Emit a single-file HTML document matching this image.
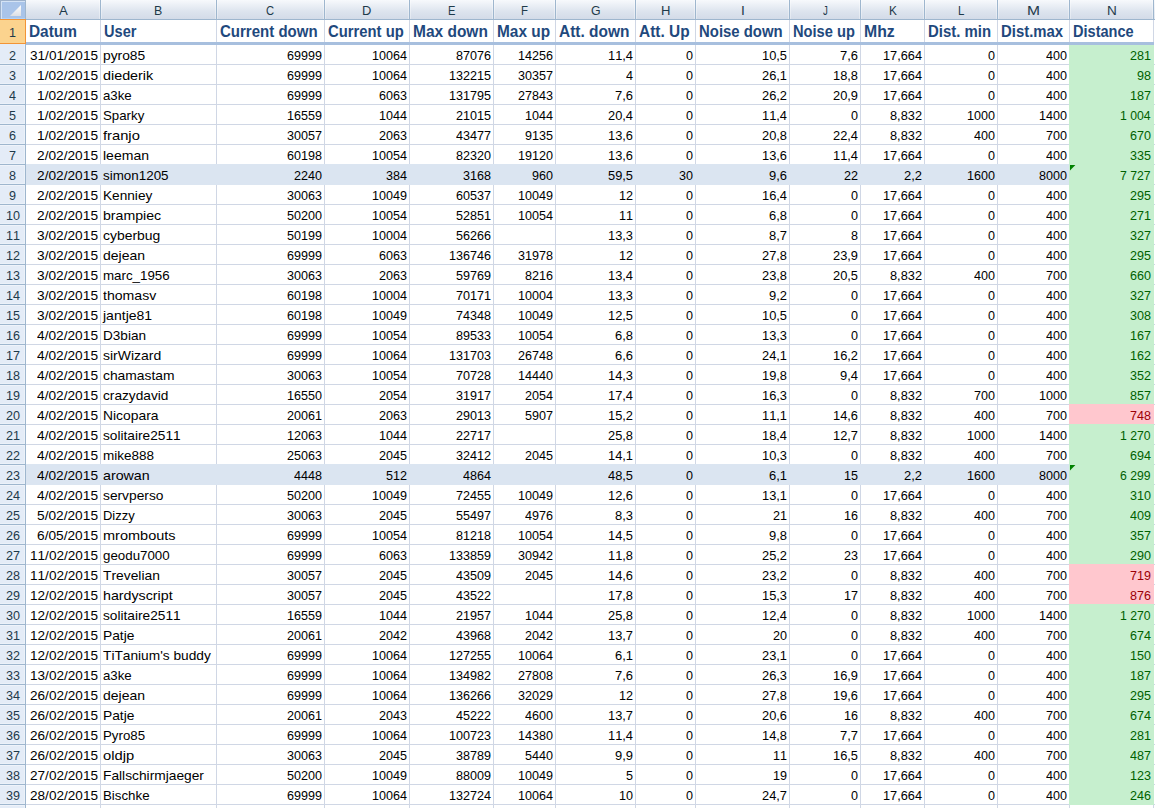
<!DOCTYPE html>
<html><head><meta charset="utf-8"><style>
html,body{margin:0;padding:0;background:#fff}
#r{position:relative;width:1155px;height:808px;overflow:hidden;background:#fff;font-family:"Liberation Sans",sans-serif}
#r>div{position:absolute}
.t{white-space:nowrap;line-height:normal;transform-origin:0 0;font-kerning:none}
</style></head><body><div id="r">
<div style="left:26px;top:0px;width:1129px;height:19px;background:#e4eaf3;background:linear-gradient(#f7f9fc,#dde4ee 60%,#d3dbe8)"></div>
<div style="left:0px;top:19px;width:1155px;height:1px;background:#9eb6ce;"></div>
<div style="left:0px;top:20px;width:25px;height:788px;background:#e4ecf7;"></div>
<div style="left:26px;top:164px;width:1043px;height:21px;background:#dbe5f1;"></div>
<div style="left:26px;top:464px;width:1043px;height:21px;background:#dbe5f1;"></div>
<div style="left:26px;top:64px;width:1129px;height:1px;background:#d0d7e5"></div>
<div style="left:26px;top:84px;width:1129px;height:1px;background:#d0d7e5"></div>
<div style="left:26px;top:104px;width:1129px;height:1px;background:#d0d7e5"></div>
<div style="left:26px;top:124px;width:1129px;height:1px;background:#d0d7e5"></div>
<div style="left:26px;top:144px;width:1129px;height:1px;background:#d0d7e5"></div>
<div style="left:26px;top:164px;width:1129px;height:1px;background:#d0d7e5"></div>
<div style="left:26px;top:184px;width:1129px;height:1px;background:#d0d7e5"></div>
<div style="left:26px;top:204px;width:1129px;height:1px;background:#d0d7e5"></div>
<div style="left:26px;top:224px;width:1129px;height:1px;background:#d0d7e5"></div>
<div style="left:26px;top:244px;width:1129px;height:1px;background:#d0d7e5"></div>
<div style="left:26px;top:264px;width:1129px;height:1px;background:#d0d7e5"></div>
<div style="left:26px;top:284px;width:1129px;height:1px;background:#d0d7e5"></div>
<div style="left:26px;top:304px;width:1129px;height:1px;background:#d0d7e5"></div>
<div style="left:26px;top:324px;width:1129px;height:1px;background:#d0d7e5"></div>
<div style="left:26px;top:344px;width:1129px;height:1px;background:#d0d7e5"></div>
<div style="left:26px;top:364px;width:1129px;height:1px;background:#d0d7e5"></div>
<div style="left:26px;top:384px;width:1129px;height:1px;background:#d0d7e5"></div>
<div style="left:26px;top:404px;width:1129px;height:1px;background:#d0d7e5"></div>
<div style="left:26px;top:424px;width:1129px;height:1px;background:#d0d7e5"></div>
<div style="left:26px;top:444px;width:1129px;height:1px;background:#d0d7e5"></div>
<div style="left:26px;top:464px;width:1129px;height:1px;background:#d0d7e5"></div>
<div style="left:26px;top:484px;width:1129px;height:1px;background:#d0d7e5"></div>
<div style="left:26px;top:504px;width:1129px;height:1px;background:#d0d7e5"></div>
<div style="left:26px;top:524px;width:1129px;height:1px;background:#d0d7e5"></div>
<div style="left:26px;top:544px;width:1129px;height:1px;background:#d0d7e5"></div>
<div style="left:26px;top:564px;width:1129px;height:1px;background:#d0d7e5"></div>
<div style="left:26px;top:584px;width:1129px;height:1px;background:#d0d7e5"></div>
<div style="left:26px;top:604px;width:1129px;height:1px;background:#d0d7e5"></div>
<div style="left:26px;top:624px;width:1129px;height:1px;background:#d0d7e5"></div>
<div style="left:26px;top:644px;width:1129px;height:1px;background:#d0d7e5"></div>
<div style="left:26px;top:664px;width:1129px;height:1px;background:#d0d7e5"></div>
<div style="left:26px;top:684px;width:1129px;height:1px;background:#d0d7e5"></div>
<div style="left:26px;top:704px;width:1129px;height:1px;background:#d0d7e5"></div>
<div style="left:26px;top:724px;width:1129px;height:1px;background:#d0d7e5"></div>
<div style="left:26px;top:744px;width:1129px;height:1px;background:#d0d7e5"></div>
<div style="left:26px;top:764px;width:1129px;height:1px;background:#d0d7e5"></div>
<div style="left:26px;top:784px;width:1129px;height:1px;background:#d0d7e5"></div>
<div style="left:26px;top:804px;width:1129px;height:1px;background:#d0d7e5"></div>
<div style="left:100px;top:20px;width:1px;height:788px;background:#d0d7e5;"></div>
<div style="left:216px;top:20px;width:1px;height:788px;background:#d0d7e5;"></div>
<div style="left:324px;top:20px;width:1px;height:788px;background:#d0d7e5;"></div>
<div style="left:409px;top:20px;width:1px;height:788px;background:#d0d7e5;"></div>
<div style="left:493px;top:20px;width:1px;height:788px;background:#d0d7e5;"></div>
<div style="left:555px;top:20px;width:1px;height:788px;background:#d0d7e5;"></div>
<div style="left:635px;top:20px;width:1px;height:788px;background:#d0d7e5;"></div>
<div style="left:695px;top:20px;width:1px;height:788px;background:#d0d7e5;"></div>
<div style="left:789px;top:20px;width:1px;height:788px;background:#d0d7e5;"></div>
<div style="left:860px;top:20px;width:1px;height:788px;background:#d0d7e5;"></div>
<div style="left:924px;top:20px;width:1px;height:788px;background:#d0d7e5;"></div>
<div style="left:997px;top:20px;width:1px;height:788px;background:#d0d7e5;"></div>
<div style="left:1069px;top:20px;width:1px;height:788px;background:#d0d7e5;"></div>
<div style="left:1153px;top:20px;width:1px;height:788px;background:#d0d7e5;"></div>
<div style="left:26px;top:164px;width:1043px;height:21px;background:#dbe5f1;"></div>
<div style="left:26px;top:464px;width:1043px;height:21px;background:#dbe5f1;"></div>
<div style="left:1069px;top:44px;width:85px;height:21px;background:#c6efce;"></div>
<div style="left:1069px;top:64px;width:85px;height:21px;background:#c6efce;"></div>
<div style="left:1069px;top:84px;width:85px;height:21px;background:#c6efce;"></div>
<div style="left:1069px;top:104px;width:85px;height:21px;background:#c6efce;"></div>
<div style="left:1069px;top:124px;width:85px;height:21px;background:#c6efce;"></div>
<div style="left:1069px;top:144px;width:85px;height:21px;background:#c6efce;"></div>
<div style="left:1069px;top:164px;width:85px;height:21px;background:#c6efce;"></div>
<div style="left:1069px;top:184px;width:85px;height:21px;background:#c6efce;"></div>
<div style="left:1069px;top:204px;width:85px;height:21px;background:#c6efce;"></div>
<div style="left:1069px;top:224px;width:85px;height:21px;background:#c6efce;"></div>
<div style="left:1069px;top:244px;width:85px;height:21px;background:#c6efce;"></div>
<div style="left:1069px;top:264px;width:85px;height:21px;background:#c6efce;"></div>
<div style="left:1069px;top:284px;width:85px;height:21px;background:#c6efce;"></div>
<div style="left:1069px;top:304px;width:85px;height:21px;background:#c6efce;"></div>
<div style="left:1069px;top:324px;width:85px;height:21px;background:#c6efce;"></div>
<div style="left:1069px;top:344px;width:85px;height:21px;background:#c6efce;"></div>
<div style="left:1069px;top:364px;width:85px;height:21px;background:#c6efce;"></div>
<div style="left:1069px;top:384px;width:85px;height:21px;background:#c6efce;"></div>
<div style="left:1069px;top:404px;width:85px;height:21px;background:#ffc7ce;"></div>
<div style="left:1069px;top:424px;width:85px;height:21px;background:#c6efce;"></div>
<div style="left:1069px;top:444px;width:85px;height:21px;background:#c6efce;"></div>
<div style="left:1069px;top:464px;width:85px;height:21px;background:#c6efce;"></div>
<div style="left:1069px;top:484px;width:85px;height:21px;background:#c6efce;"></div>
<div style="left:1069px;top:504px;width:85px;height:21px;background:#c6efce;"></div>
<div style="left:1069px;top:524px;width:85px;height:21px;background:#c6efce;"></div>
<div style="left:1069px;top:544px;width:85px;height:21px;background:#c6efce;"></div>
<div style="left:1069px;top:564px;width:85px;height:21px;background:#ffc7ce;"></div>
<div style="left:1069px;top:584px;width:85px;height:21px;background:#ffc7ce;"></div>
<div style="left:1069px;top:604px;width:85px;height:21px;background:#c6efce;"></div>
<div style="left:1069px;top:624px;width:85px;height:21px;background:#c6efce;"></div>
<div style="left:1069px;top:644px;width:85px;height:21px;background:#c6efce;"></div>
<div style="left:1069px;top:664px;width:85px;height:21px;background:#c6efce;"></div>
<div style="left:1069px;top:684px;width:85px;height:21px;background:#c6efce;"></div>
<div style="left:1069px;top:704px;width:85px;height:21px;background:#c6efce;"></div>
<div style="left:1069px;top:724px;width:85px;height:21px;background:#c6efce;"></div>
<div style="left:1069px;top:744px;width:85px;height:21px;background:#c6efce;"></div>
<div style="left:1069px;top:764px;width:85px;height:21px;background:#c6efce;"></div>
<div style="left:1069px;top:784px;width:85px;height:21px;background:#c6efce;"></div>
<div style="left:26px;top:42px;width:1128px;height:3px;background:#a7bfde;"></div>
<div style="left:25px;top:0px;width:1px;height:20px;background:#9eb6ce;"></div>
<div style="left:100px;top:0px;width:1px;height:20px;background:#9eb6ce;"></div>
<div style="left:99px;top:0px;width:1px;height:19px;background:rgba(255,255,255,0.35);"></div>
<div style="left:101px;top:0px;width:1px;height:19px;background:rgba(255,255,255,0.35);"></div>
<div style="left:216px;top:0px;width:1px;height:20px;background:#9eb6ce;"></div>
<div style="left:215px;top:0px;width:1px;height:19px;background:rgba(255,255,255,0.35);"></div>
<div style="left:217px;top:0px;width:1px;height:19px;background:rgba(255,255,255,0.35);"></div>
<div style="left:324px;top:0px;width:1px;height:20px;background:#9eb6ce;"></div>
<div style="left:323px;top:0px;width:1px;height:19px;background:rgba(255,255,255,0.35);"></div>
<div style="left:325px;top:0px;width:1px;height:19px;background:rgba(255,255,255,0.35);"></div>
<div style="left:409px;top:0px;width:1px;height:20px;background:#9eb6ce;"></div>
<div style="left:408px;top:0px;width:1px;height:19px;background:rgba(255,255,255,0.35);"></div>
<div style="left:410px;top:0px;width:1px;height:19px;background:rgba(255,255,255,0.35);"></div>
<div style="left:493px;top:0px;width:1px;height:20px;background:#9eb6ce;"></div>
<div style="left:492px;top:0px;width:1px;height:19px;background:rgba(255,255,255,0.35);"></div>
<div style="left:494px;top:0px;width:1px;height:19px;background:rgba(255,255,255,0.35);"></div>
<div style="left:555px;top:0px;width:1px;height:20px;background:#9eb6ce;"></div>
<div style="left:554px;top:0px;width:1px;height:19px;background:rgba(255,255,255,0.35);"></div>
<div style="left:556px;top:0px;width:1px;height:19px;background:rgba(255,255,255,0.35);"></div>
<div style="left:635px;top:0px;width:1px;height:20px;background:#9eb6ce;"></div>
<div style="left:634px;top:0px;width:1px;height:19px;background:rgba(255,255,255,0.35);"></div>
<div style="left:636px;top:0px;width:1px;height:19px;background:rgba(255,255,255,0.35);"></div>
<div style="left:695px;top:0px;width:1px;height:20px;background:#9eb6ce;"></div>
<div style="left:694px;top:0px;width:1px;height:19px;background:rgba(255,255,255,0.35);"></div>
<div style="left:696px;top:0px;width:1px;height:19px;background:rgba(255,255,255,0.35);"></div>
<div style="left:789px;top:0px;width:1px;height:20px;background:#9eb6ce;"></div>
<div style="left:788px;top:0px;width:1px;height:19px;background:rgba(255,255,255,0.35);"></div>
<div style="left:790px;top:0px;width:1px;height:19px;background:rgba(255,255,255,0.35);"></div>
<div style="left:860px;top:0px;width:1px;height:20px;background:#9eb6ce;"></div>
<div style="left:859px;top:0px;width:1px;height:19px;background:rgba(255,255,255,0.35);"></div>
<div style="left:861px;top:0px;width:1px;height:19px;background:rgba(255,255,255,0.35);"></div>
<div style="left:924px;top:0px;width:1px;height:20px;background:#9eb6ce;"></div>
<div style="left:923px;top:0px;width:1px;height:19px;background:rgba(255,255,255,0.35);"></div>
<div style="left:925px;top:0px;width:1px;height:19px;background:rgba(255,255,255,0.35);"></div>
<div style="left:997px;top:0px;width:1px;height:20px;background:#9eb6ce;"></div>
<div style="left:996px;top:0px;width:1px;height:19px;background:rgba(255,255,255,0.35);"></div>
<div style="left:998px;top:0px;width:1px;height:19px;background:rgba(255,255,255,0.35);"></div>
<div style="left:1069px;top:0px;width:1px;height:20px;background:#9eb6ce;"></div>
<div style="left:1068px;top:0px;width:1px;height:19px;background:rgba(255,255,255,0.35);"></div>
<div style="left:1070px;top:0px;width:1px;height:19px;background:rgba(255,255,255,0.35);"></div>
<div style="left:1153px;top:0px;width:1px;height:20px;background:#9eb6ce;"></div>
<div style="left:1152px;top:0px;width:1px;height:19px;background:rgba(255,255,255,0.35);"></div>
<div style="left:1154px;top:0px;width:1px;height:19px;background:rgba(255,255,255,0.35);"></div>
<div style="left:24px;top:44px;width:1px;height:764px;background:rgba(255,255,255,0.3);"></div>
<div style="left:0px;top:64px;width:25px;height:1px;background:#9eb6ce;"></div>
<div style="left:0px;top:65px;width:24px;height:1px;background:rgba(255,255,255,0.4);"></div>
<div style="left:0px;top:63px;width:24px;height:1px;background:rgba(255,255,255,0.25);"></div>
<div style="left:0px;top:84px;width:25px;height:1px;background:#9eb6ce;"></div>
<div style="left:0px;top:85px;width:24px;height:1px;background:rgba(255,255,255,0.4);"></div>
<div style="left:0px;top:83px;width:24px;height:1px;background:rgba(255,255,255,0.25);"></div>
<div style="left:0px;top:104px;width:25px;height:1px;background:#9eb6ce;"></div>
<div style="left:0px;top:105px;width:24px;height:1px;background:rgba(255,255,255,0.4);"></div>
<div style="left:0px;top:103px;width:24px;height:1px;background:rgba(255,255,255,0.25);"></div>
<div style="left:0px;top:124px;width:25px;height:1px;background:#9eb6ce;"></div>
<div style="left:0px;top:125px;width:24px;height:1px;background:rgba(255,255,255,0.4);"></div>
<div style="left:0px;top:123px;width:24px;height:1px;background:rgba(255,255,255,0.25);"></div>
<div style="left:0px;top:144px;width:25px;height:1px;background:#9eb6ce;"></div>
<div style="left:0px;top:145px;width:24px;height:1px;background:rgba(255,255,255,0.4);"></div>
<div style="left:0px;top:143px;width:24px;height:1px;background:rgba(255,255,255,0.25);"></div>
<div style="left:0px;top:164px;width:25px;height:1px;background:#9eb6ce;"></div>
<div style="left:0px;top:165px;width:24px;height:1px;background:rgba(255,255,255,0.4);"></div>
<div style="left:0px;top:163px;width:24px;height:1px;background:rgba(255,255,255,0.25);"></div>
<div style="left:0px;top:184px;width:25px;height:1px;background:#9eb6ce;"></div>
<div style="left:0px;top:185px;width:24px;height:1px;background:rgba(255,255,255,0.4);"></div>
<div style="left:0px;top:183px;width:24px;height:1px;background:rgba(255,255,255,0.25);"></div>
<div style="left:0px;top:204px;width:25px;height:1px;background:#9eb6ce;"></div>
<div style="left:0px;top:205px;width:24px;height:1px;background:rgba(255,255,255,0.4);"></div>
<div style="left:0px;top:203px;width:24px;height:1px;background:rgba(255,255,255,0.25);"></div>
<div style="left:0px;top:224px;width:25px;height:1px;background:#9eb6ce;"></div>
<div style="left:0px;top:225px;width:24px;height:1px;background:rgba(255,255,255,0.4);"></div>
<div style="left:0px;top:223px;width:24px;height:1px;background:rgba(255,255,255,0.25);"></div>
<div style="left:0px;top:244px;width:25px;height:1px;background:#9eb6ce;"></div>
<div style="left:0px;top:245px;width:24px;height:1px;background:rgba(255,255,255,0.4);"></div>
<div style="left:0px;top:243px;width:24px;height:1px;background:rgba(255,255,255,0.25);"></div>
<div style="left:0px;top:264px;width:25px;height:1px;background:#9eb6ce;"></div>
<div style="left:0px;top:265px;width:24px;height:1px;background:rgba(255,255,255,0.4);"></div>
<div style="left:0px;top:263px;width:24px;height:1px;background:rgba(255,255,255,0.25);"></div>
<div style="left:0px;top:284px;width:25px;height:1px;background:#9eb6ce;"></div>
<div style="left:0px;top:285px;width:24px;height:1px;background:rgba(255,255,255,0.4);"></div>
<div style="left:0px;top:283px;width:24px;height:1px;background:rgba(255,255,255,0.25);"></div>
<div style="left:0px;top:304px;width:25px;height:1px;background:#9eb6ce;"></div>
<div style="left:0px;top:305px;width:24px;height:1px;background:rgba(255,255,255,0.4);"></div>
<div style="left:0px;top:303px;width:24px;height:1px;background:rgba(255,255,255,0.25);"></div>
<div style="left:0px;top:324px;width:25px;height:1px;background:#9eb6ce;"></div>
<div style="left:0px;top:325px;width:24px;height:1px;background:rgba(255,255,255,0.4);"></div>
<div style="left:0px;top:323px;width:24px;height:1px;background:rgba(255,255,255,0.25);"></div>
<div style="left:0px;top:344px;width:25px;height:1px;background:#9eb6ce;"></div>
<div style="left:0px;top:345px;width:24px;height:1px;background:rgba(255,255,255,0.4);"></div>
<div style="left:0px;top:343px;width:24px;height:1px;background:rgba(255,255,255,0.25);"></div>
<div style="left:0px;top:364px;width:25px;height:1px;background:#9eb6ce;"></div>
<div style="left:0px;top:365px;width:24px;height:1px;background:rgba(255,255,255,0.4);"></div>
<div style="left:0px;top:363px;width:24px;height:1px;background:rgba(255,255,255,0.25);"></div>
<div style="left:0px;top:384px;width:25px;height:1px;background:#9eb6ce;"></div>
<div style="left:0px;top:385px;width:24px;height:1px;background:rgba(255,255,255,0.4);"></div>
<div style="left:0px;top:383px;width:24px;height:1px;background:rgba(255,255,255,0.25);"></div>
<div style="left:0px;top:404px;width:25px;height:1px;background:#9eb6ce;"></div>
<div style="left:0px;top:405px;width:24px;height:1px;background:rgba(255,255,255,0.4);"></div>
<div style="left:0px;top:403px;width:24px;height:1px;background:rgba(255,255,255,0.25);"></div>
<div style="left:0px;top:424px;width:25px;height:1px;background:#9eb6ce;"></div>
<div style="left:0px;top:425px;width:24px;height:1px;background:rgba(255,255,255,0.4);"></div>
<div style="left:0px;top:423px;width:24px;height:1px;background:rgba(255,255,255,0.25);"></div>
<div style="left:0px;top:444px;width:25px;height:1px;background:#9eb6ce;"></div>
<div style="left:0px;top:445px;width:24px;height:1px;background:rgba(255,255,255,0.4);"></div>
<div style="left:0px;top:443px;width:24px;height:1px;background:rgba(255,255,255,0.25);"></div>
<div style="left:0px;top:464px;width:25px;height:1px;background:#9eb6ce;"></div>
<div style="left:0px;top:465px;width:24px;height:1px;background:rgba(255,255,255,0.4);"></div>
<div style="left:0px;top:463px;width:24px;height:1px;background:rgba(255,255,255,0.25);"></div>
<div style="left:0px;top:484px;width:25px;height:1px;background:#9eb6ce;"></div>
<div style="left:0px;top:485px;width:24px;height:1px;background:rgba(255,255,255,0.4);"></div>
<div style="left:0px;top:483px;width:24px;height:1px;background:rgba(255,255,255,0.25);"></div>
<div style="left:0px;top:504px;width:25px;height:1px;background:#9eb6ce;"></div>
<div style="left:0px;top:505px;width:24px;height:1px;background:rgba(255,255,255,0.4);"></div>
<div style="left:0px;top:503px;width:24px;height:1px;background:rgba(255,255,255,0.25);"></div>
<div style="left:0px;top:524px;width:25px;height:1px;background:#9eb6ce;"></div>
<div style="left:0px;top:525px;width:24px;height:1px;background:rgba(255,255,255,0.4);"></div>
<div style="left:0px;top:523px;width:24px;height:1px;background:rgba(255,255,255,0.25);"></div>
<div style="left:0px;top:544px;width:25px;height:1px;background:#9eb6ce;"></div>
<div style="left:0px;top:545px;width:24px;height:1px;background:rgba(255,255,255,0.4);"></div>
<div style="left:0px;top:543px;width:24px;height:1px;background:rgba(255,255,255,0.25);"></div>
<div style="left:0px;top:564px;width:25px;height:1px;background:#9eb6ce;"></div>
<div style="left:0px;top:565px;width:24px;height:1px;background:rgba(255,255,255,0.4);"></div>
<div style="left:0px;top:563px;width:24px;height:1px;background:rgba(255,255,255,0.25);"></div>
<div style="left:0px;top:584px;width:25px;height:1px;background:#9eb6ce;"></div>
<div style="left:0px;top:585px;width:24px;height:1px;background:rgba(255,255,255,0.4);"></div>
<div style="left:0px;top:583px;width:24px;height:1px;background:rgba(255,255,255,0.25);"></div>
<div style="left:0px;top:604px;width:25px;height:1px;background:#9eb6ce;"></div>
<div style="left:0px;top:605px;width:24px;height:1px;background:rgba(255,255,255,0.4);"></div>
<div style="left:0px;top:603px;width:24px;height:1px;background:rgba(255,255,255,0.25);"></div>
<div style="left:0px;top:624px;width:25px;height:1px;background:#9eb6ce;"></div>
<div style="left:0px;top:625px;width:24px;height:1px;background:rgba(255,255,255,0.4);"></div>
<div style="left:0px;top:623px;width:24px;height:1px;background:rgba(255,255,255,0.25);"></div>
<div style="left:0px;top:644px;width:25px;height:1px;background:#9eb6ce;"></div>
<div style="left:0px;top:645px;width:24px;height:1px;background:rgba(255,255,255,0.4);"></div>
<div style="left:0px;top:643px;width:24px;height:1px;background:rgba(255,255,255,0.25);"></div>
<div style="left:0px;top:664px;width:25px;height:1px;background:#9eb6ce;"></div>
<div style="left:0px;top:665px;width:24px;height:1px;background:rgba(255,255,255,0.4);"></div>
<div style="left:0px;top:663px;width:24px;height:1px;background:rgba(255,255,255,0.25);"></div>
<div style="left:0px;top:684px;width:25px;height:1px;background:#9eb6ce;"></div>
<div style="left:0px;top:685px;width:24px;height:1px;background:rgba(255,255,255,0.4);"></div>
<div style="left:0px;top:683px;width:24px;height:1px;background:rgba(255,255,255,0.25);"></div>
<div style="left:0px;top:704px;width:25px;height:1px;background:#9eb6ce;"></div>
<div style="left:0px;top:705px;width:24px;height:1px;background:rgba(255,255,255,0.4);"></div>
<div style="left:0px;top:703px;width:24px;height:1px;background:rgba(255,255,255,0.25);"></div>
<div style="left:0px;top:724px;width:25px;height:1px;background:#9eb6ce;"></div>
<div style="left:0px;top:725px;width:24px;height:1px;background:rgba(255,255,255,0.4);"></div>
<div style="left:0px;top:723px;width:24px;height:1px;background:rgba(255,255,255,0.25);"></div>
<div style="left:0px;top:744px;width:25px;height:1px;background:#9eb6ce;"></div>
<div style="left:0px;top:745px;width:24px;height:1px;background:rgba(255,255,255,0.4);"></div>
<div style="left:0px;top:743px;width:24px;height:1px;background:rgba(255,255,255,0.25);"></div>
<div style="left:0px;top:764px;width:25px;height:1px;background:#9eb6ce;"></div>
<div style="left:0px;top:765px;width:24px;height:1px;background:rgba(255,255,255,0.4);"></div>
<div style="left:0px;top:763px;width:24px;height:1px;background:rgba(255,255,255,0.25);"></div>
<div style="left:0px;top:784px;width:25px;height:1px;background:#9eb6ce;"></div>
<div style="left:0px;top:785px;width:24px;height:1px;background:rgba(255,255,255,0.4);"></div>
<div style="left:0px;top:783px;width:24px;height:1px;background:rgba(255,255,255,0.25);"></div>
<div style="left:0px;top:804px;width:25px;height:1px;background:#9eb6ce;"></div>
<div style="left:0px;top:805px;width:24px;height:1px;background:rgba(255,255,255,0.4);"></div>
<div style="left:0px;top:803px;width:24px;height:1px;background:rgba(255,255,255,0.25);"></div>
<div style="left:25px;top:0px;width:1px;height:808px;background:#9eb6ce;"></div>
<div style="left:0px;top:19px;width:26px;height:25px;background:#fbd38e;box-sizing:border-box;border-top:1px solid #f29436;border-bottom:1px solid #f29436;border-right:1px solid #f29436"></div>
<div style="left:0px;top:0px;width:25px;height:19px;background:#a9c4e9;box-sizing:border-box;border-left:1px solid #9db1cb;border-top:1px solid #9db1cb;box-shadow:inset 1px 1px 0 #d4e3f5, inset 0 -1px 0 #b1d3fa"></div>
<svg style="position:absolute;left:0;top:0" width="25" height="19"><defs><linearGradient id="tg" x1="0" y1="0" x2="0" y2="1"><stop offset="0" stop-color="#ffffff"/><stop offset="1" stop-color="#dcdfe5"/></linearGradient></defs><polygon points="21,5 21,16 10,16" fill="url(#tg)"/></svg>
<svg style="position:absolute;left:1070px;top:165px" width="7" height="7"><polygon points="0,0 5.4,0 0,5.4" fill="#008000"/></svg>
<svg style="position:absolute;left:1070px;top:465px" width="7" height="7"><polygon points="0,0 5.4,0 0,5.4" fill="#008000"/></svg>
<div class="t" style="left:58.61px;top:3.00px;font-size:13px;color:#1e3a4a;transform:scaleX(1.0132)">A</div>
<div class="t" style="left:154.37px;top:3.00px;font-size:13px;color:#1e3a4a;transform:scaleX(0.9525)">B</div>
<div class="t" style="left:266.45px;top:3.00px;font-size:13px;color:#1e3a4a;transform:scaleX(0.8623)">C</div>
<div class="t" style="left:362.33px;top:3.00px;font-size:13px;color:#1e3a4a;transform:scaleX(0.9950)">D</div>
<div class="t" style="left:447.79px;top:3.00px;font-size:13px;color:#1e3a4a;transform:scaleX(0.8550)">E</div>
<div class="t" style="left:521.01px;top:3.00px;font-size:13px;color:#1e3a4a;transform:scaleX(0.8785)">F</div>
<div class="t" style="left:590.71px;top:3.00px;font-size:13px;color:#1e3a4a;transform:scaleX(0.9473)">G</div>
<div class="t" style="left:660.77px;top:3.00px;font-size:13px;color:#1e3a4a;transform:scaleX(1.0076)">H</div>
<div class="t" style="left:740.59px;top:3.00px;font-size:13px;color:#1e3a4a;transform:scaleX(1.0592)">I</div>
<div class="t" style="left:822.58px;top:3.00px;font-size:13px;color:#1e3a4a;transform:scaleX(0.7448)">J</div>
<div class="t" style="left:888.56px;top:3.00px;font-size:13px;color:#1e3a4a;transform:scaleX(0.9097)">K</div>
<div class="t" style="left:957.81px;top:3.00px;font-size:13px;color:#1e3a4a;transform:scaleX(0.8829)">L</div>
<div class="t" style="left:1027.01px;top:3.00px;font-size:13px;color:#1e3a4a;transform:scaleX(1.1988)">M</div>
<div class="t" style="left:1106.60px;top:3.00px;font-size:13px;color:#1e3a4a;transform:scaleX(1.0440)">N</div>
<div class="t" style="left:9.00px;top:25.00px;font-size:13px;color:#1e3a4a;transform:scaleX(0.9682)">1</div>
<div class="t" style="left:9.00px;top:48.00px;font-size:13px;color:#1e3a4a;transform:scaleX(0.9682)">2</div>
<div class="t" style="left:9.00px;top:68.00px;font-size:13px;color:#1e3a4a;transform:scaleX(0.9682)">3</div>
<div class="t" style="left:9.00px;top:88.00px;font-size:13px;color:#1e3a4a;transform:scaleX(0.9682)">4</div>
<div class="t" style="left:9.00px;top:108.00px;font-size:13px;color:#1e3a4a;transform:scaleX(0.9682)">5</div>
<div class="t" style="left:9.00px;top:128.00px;font-size:13px;color:#1e3a4a;transform:scaleX(0.9682)">6</div>
<div class="t" style="left:9.00px;top:148.00px;font-size:13px;color:#1e3a4a;transform:scaleX(0.9682)">7</div>
<div class="t" style="left:9.00px;top:168.00px;font-size:13px;color:#1e3a4a;transform:scaleX(0.9682)">8</div>
<div class="t" style="left:9.00px;top:188.00px;font-size:13px;color:#1e3a4a;transform:scaleX(0.9682)">9</div>
<div class="t" style="left:5.50px;top:208.00px;font-size:13px;color:#1e3a4a;transform:scaleX(0.9682)">10</div>
<div class="t" style="left:5.50px;top:228.00px;font-size:13px;color:#1e3a4a;transform:scaleX(0.9682)">11</div>
<div class="t" style="left:5.50px;top:248.00px;font-size:13px;color:#1e3a4a;transform:scaleX(0.9682)">12</div>
<div class="t" style="left:5.50px;top:268.00px;font-size:13px;color:#1e3a4a;transform:scaleX(0.9682)">13</div>
<div class="t" style="left:5.50px;top:288.00px;font-size:13px;color:#1e3a4a;transform:scaleX(0.9682)">14</div>
<div class="t" style="left:5.50px;top:308.00px;font-size:13px;color:#1e3a4a;transform:scaleX(0.9682)">15</div>
<div class="t" style="left:5.50px;top:328.00px;font-size:13px;color:#1e3a4a;transform:scaleX(0.9682)">16</div>
<div class="t" style="left:5.50px;top:348.00px;font-size:13px;color:#1e3a4a;transform:scaleX(0.9682)">17</div>
<div class="t" style="left:5.50px;top:368.00px;font-size:13px;color:#1e3a4a;transform:scaleX(0.9682)">18</div>
<div class="t" style="left:5.50px;top:388.00px;font-size:13px;color:#1e3a4a;transform:scaleX(0.9682)">19</div>
<div class="t" style="left:5.50px;top:408.00px;font-size:13px;color:#1e3a4a;transform:scaleX(0.9682)">20</div>
<div class="t" style="left:5.50px;top:428.00px;font-size:13px;color:#1e3a4a;transform:scaleX(0.9682)">21</div>
<div class="t" style="left:5.50px;top:448.00px;font-size:13px;color:#1e3a4a;transform:scaleX(0.9682)">22</div>
<div class="t" style="left:5.50px;top:468.00px;font-size:13px;color:#1e3a4a;transform:scaleX(0.9682)">23</div>
<div class="t" style="left:5.50px;top:488.00px;font-size:13px;color:#1e3a4a;transform:scaleX(0.9682)">24</div>
<div class="t" style="left:5.50px;top:508.00px;font-size:13px;color:#1e3a4a;transform:scaleX(0.9682)">25</div>
<div class="t" style="left:5.50px;top:528.00px;font-size:13px;color:#1e3a4a;transform:scaleX(0.9682)">26</div>
<div class="t" style="left:5.50px;top:548.00px;font-size:13px;color:#1e3a4a;transform:scaleX(0.9682)">27</div>
<div class="t" style="left:5.50px;top:568.00px;font-size:13px;color:#1e3a4a;transform:scaleX(0.9682)">28</div>
<div class="t" style="left:5.50px;top:588.00px;font-size:13px;color:#1e3a4a;transform:scaleX(0.9682)">29</div>
<div class="t" style="left:5.50px;top:608.00px;font-size:13px;color:#1e3a4a;transform:scaleX(0.9682)">30</div>
<div class="t" style="left:5.50px;top:628.00px;font-size:13px;color:#1e3a4a;transform:scaleX(0.9682)">31</div>
<div class="t" style="left:5.50px;top:648.00px;font-size:13px;color:#1e3a4a;transform:scaleX(0.9682)">32</div>
<div class="t" style="left:5.50px;top:668.00px;font-size:13px;color:#1e3a4a;transform:scaleX(0.9682)">33</div>
<div class="t" style="left:5.50px;top:688.00px;font-size:13px;color:#1e3a4a;transform:scaleX(0.9682)">34</div>
<div class="t" style="left:5.50px;top:708.00px;font-size:13px;color:#1e3a4a;transform:scaleX(0.9682)">35</div>
<div class="t" style="left:5.50px;top:728.00px;font-size:13px;color:#1e3a4a;transform:scaleX(0.9682)">36</div>
<div class="t" style="left:5.50px;top:748.00px;font-size:13px;color:#1e3a4a;transform:scaleX(0.9682)">37</div>
<div class="t" style="left:5.50px;top:768.00px;font-size:13px;color:#1e3a4a;transform:scaleX(0.9682)">38</div>
<div class="t" style="left:5.50px;top:788.00px;font-size:13px;color:#1e3a4a;transform:scaleX(0.9682)">39</div>
<div class="t" style="left:28.50px;top:23.00px;font-size:15.75px;font-weight:bold;color:#1f497d;transform:scaleX(0.9776)">Datum</div>
<div class="t" style="left:103.50px;top:23.00px;font-size:15.75px;font-weight:bold;color:#1f497d;transform:scaleX(0.9265)">User</div>
<div class="t" style="left:219.50px;top:23.00px;font-size:15.75px;font-weight:bold;color:#1f497d;transform:scaleX(0.9532)">Current down</div>
<div class="t" style="left:327.50px;top:23.00px;font-size:15.75px;font-weight:bold;color:#1f497d;transform:scaleX(0.9416)">Current up</div>
<div class="t" style="left:412.50px;top:23.00px;font-size:15.75px;font-weight:bold;color:#1f497d;transform:scaleX(0.9836)">Max down</div>
<div class="t" style="left:496.50px;top:23.00px;font-size:15.75px;font-weight:bold;color:#1f497d;transform:scaleX(0.9787)">Max up</div>
<div class="t" style="left:558.50px;top:23.00px;font-size:15.75px;font-weight:bold;color:#1f497d;transform:scaleX(0.9822)">Att. down</div>
<div class="t" style="left:638.50px;top:23.00px;font-size:15.75px;font-weight:bold;color:#1f497d;transform:scaleX(0.9813)">Att. Up</div>
<div class="t" style="left:698.50px;top:23.00px;font-size:15.75px;font-weight:bold;color:#1f497d;transform:scaleX(0.9467)">Noise down</div>
<div class="t" style="left:792.50px;top:23.00px;font-size:15.75px;font-weight:bold;color:#1f497d;transform:scaleX(0.9304)">Noise up</div>
<div class="t" style="left:863.50px;top:23.00px;font-size:15.75px;font-weight:bold;color:#1f497d;transform:scaleX(1.0030)">Mhz</div>
<div class="t" style="left:927.50px;top:23.00px;font-size:15.75px;font-weight:bold;color:#1f497d;transform:scaleX(0.9475)">Dist. min</div>
<div class="t" style="left:1000.50px;top:23.00px;font-size:15.75px;font-weight:bold;color:#1f497d;transform:scaleX(0.9456)">Dist.max</div>
<div class="t" style="left:1072.50px;top:23.00px;font-size:15.75px;font-weight:bold;color:#1f497d;transform:scaleX(0.9245)">Distance</div>
<div class="t" style="left:29.80px;top:48.00px;font-size:13px;transform:scaleX(1.0451)">31/01/2015</div>
<div class="t" style="left:102.50px;top:48.00px;font-size:13px;transform:scaleX(1.0604)">pyro85</div>
<div class="t" style="left:286.80px;top:48.00px;font-size:13px;transform:scaleX(0.9682)">69999</div>
<div class="t" style="left:371.80px;top:48.00px;font-size:13px;transform:scaleX(0.9682)">10064</div>
<div class="t" style="left:455.80px;top:48.00px;font-size:13px;transform:scaleX(0.9682)">87076</div>
<div class="t" style="left:517.80px;top:48.00px;font-size:13px;transform:scaleX(0.9682)">14256</div>
<div class="t" style="left:607.80px;top:48.00px;font-size:13px;transform:scaleX(0.9881)">11,4</div>
<div class="t" style="left:685.80px;top:48.00px;font-size:13px;transform:scaleX(0.9682)">0</div>
<div class="t" style="left:761.80px;top:48.00px;font-size:13px;transform:scaleX(0.9881)">10,5</div>
<div class="t" style="left:839.80px;top:48.00px;font-size:13px;transform:scaleX(0.9960)">7,6</div>
<div class="t" style="left:882.80px;top:48.00px;font-size:13px;transform:scaleX(0.9808)">17,664</div>
<div class="t" style="left:987.80px;top:48.00px;font-size:13px;transform:scaleX(0.9682)">0</div>
<div class="t" style="left:1045.80px;top:48.00px;font-size:13px;transform:scaleX(0.9682)">400</div>
<div class="t" style="left:1129.80px;top:48.00px;font-size:13px;color:#006100;transform:scaleX(0.9682)">281</div>
<div class="t" style="left:36.80px;top:68.00px;font-size:13px;transform:scaleX(1.0548)">1/02/2015</div>
<div class="t" style="left:102.50px;top:68.00px;font-size:13px;transform:scaleX(1.1033)">diederik</div>
<div class="t" style="left:286.80px;top:68.00px;font-size:13px;transform:scaleX(0.9682)">69999</div>
<div class="t" style="left:371.80px;top:68.00px;font-size:13px;transform:scaleX(0.9682)">10064</div>
<div class="t" style="left:448.80px;top:68.00px;font-size:13px;transform:scaleX(0.9682)">132215</div>
<div class="t" style="left:517.80px;top:68.00px;font-size:13px;transform:scaleX(0.9682)">30357</div>
<div class="t" style="left:625.80px;top:68.00px;font-size:13px;transform:scaleX(0.9682)">4</div>
<div class="t" style="left:685.80px;top:68.00px;font-size:13px;transform:scaleX(0.9682)">0</div>
<div class="t" style="left:761.80px;top:68.00px;font-size:13px;transform:scaleX(0.9881)">26,1</div>
<div class="t" style="left:832.80px;top:68.00px;font-size:13px;transform:scaleX(0.9881)">18,8</div>
<div class="t" style="left:882.80px;top:68.00px;font-size:13px;transform:scaleX(0.9808)">17,664</div>
<div class="t" style="left:987.80px;top:68.00px;font-size:13px;transform:scaleX(0.9682)">0</div>
<div class="t" style="left:1045.80px;top:68.00px;font-size:13px;transform:scaleX(0.9682)">400</div>
<div class="t" style="left:1136.80px;top:68.00px;font-size:13px;color:#006100;transform:scaleX(0.9682)">98</div>
<div class="t" style="left:36.80px;top:88.00px;font-size:13px;transform:scaleX(1.0548)">1/02/2015</div>
<div class="t" style="left:102.50px;top:88.00px;font-size:13px;transform:scaleX(1.0192)">a3ke</div>
<div class="t" style="left:286.80px;top:88.00px;font-size:13px;transform:scaleX(0.9682)">69999</div>
<div class="t" style="left:378.80px;top:88.00px;font-size:13px;transform:scaleX(0.9682)">6063</div>
<div class="t" style="left:448.80px;top:88.00px;font-size:13px;transform:scaleX(0.9682)">131795</div>
<div class="t" style="left:517.80px;top:88.00px;font-size:13px;transform:scaleX(0.9682)">27843</div>
<div class="t" style="left:614.80px;top:88.00px;font-size:13px;transform:scaleX(0.9960)">7,6</div>
<div class="t" style="left:685.80px;top:88.00px;font-size:13px;transform:scaleX(0.9682)">0</div>
<div class="t" style="left:761.80px;top:88.00px;font-size:13px;transform:scaleX(0.9881)">26,2</div>
<div class="t" style="left:832.80px;top:88.00px;font-size:13px;transform:scaleX(0.9881)">20,9</div>
<div class="t" style="left:882.80px;top:88.00px;font-size:13px;transform:scaleX(0.9808)">17,664</div>
<div class="t" style="left:987.80px;top:88.00px;font-size:13px;transform:scaleX(0.9682)">0</div>
<div class="t" style="left:1045.80px;top:88.00px;font-size:13px;transform:scaleX(0.9682)">400</div>
<div class="t" style="left:1129.80px;top:88.00px;font-size:13px;color:#006100;transform:scaleX(0.9682)">187</div>
<div class="t" style="left:36.80px;top:108.00px;font-size:13px;transform:scaleX(1.0548)">1/02/2015</div>
<div class="t" style="left:102.50px;top:108.00px;font-size:13px;transform:scaleX(1.0206)">Sparky</div>
<div class="t" style="left:286.80px;top:108.00px;font-size:13px;transform:scaleX(0.9682)">16559</div>
<div class="t" style="left:378.80px;top:108.00px;font-size:13px;transform:scaleX(0.9682)">1044</div>
<div class="t" style="left:455.80px;top:108.00px;font-size:13px;transform:scaleX(0.9682)">21015</div>
<div class="t" style="left:524.80px;top:108.00px;font-size:13px;transform:scaleX(0.9682)">1044</div>
<div class="t" style="left:607.80px;top:108.00px;font-size:13px;transform:scaleX(0.9881)">20,4</div>
<div class="t" style="left:685.80px;top:108.00px;font-size:13px;transform:scaleX(0.9682)">0</div>
<div class="t" style="left:761.80px;top:108.00px;font-size:13px;transform:scaleX(0.9881)">11,4</div>
<div class="t" style="left:850.80px;top:108.00px;font-size:13px;transform:scaleX(0.9682)">0</div>
<div class="t" style="left:889.80px;top:108.00px;font-size:13px;transform:scaleX(0.9837)">8,832</div>
<div class="t" style="left:966.80px;top:108.00px;font-size:13px;transform:scaleX(0.9682)">1000</div>
<div class="t" style="left:1038.80px;top:108.00px;font-size:13px;transform:scaleX(0.9682)">1400</div>
<div class="t" style="left:1120.20px;top:108.00px;font-size:13px;color:#006100;transform:scaleX(0.9406)">1 004</div>
<div class="t" style="left:36.80px;top:128.00px;font-size:13px;transform:scaleX(1.0548)">1/02/2015</div>
<div class="t" style="left:102.50px;top:128.00px;font-size:13px;transform:scaleX(1.1322)">franjo</div>
<div class="t" style="left:286.80px;top:128.00px;font-size:13px;transform:scaleX(0.9682)">30057</div>
<div class="t" style="left:378.80px;top:128.00px;font-size:13px;transform:scaleX(0.9682)">2063</div>
<div class="t" style="left:455.80px;top:128.00px;font-size:13px;transform:scaleX(0.9682)">43477</div>
<div class="t" style="left:524.80px;top:128.00px;font-size:13px;transform:scaleX(0.9682)">9135</div>
<div class="t" style="left:607.80px;top:128.00px;font-size:13px;transform:scaleX(0.9881)">13,6</div>
<div class="t" style="left:685.80px;top:128.00px;font-size:13px;transform:scaleX(0.9682)">0</div>
<div class="t" style="left:761.80px;top:128.00px;font-size:13px;transform:scaleX(0.9881)">20,8</div>
<div class="t" style="left:832.80px;top:128.00px;font-size:13px;transform:scaleX(0.9881)">22,4</div>
<div class="t" style="left:889.80px;top:128.00px;font-size:13px;transform:scaleX(0.9837)">8,832</div>
<div class="t" style="left:973.80px;top:128.00px;font-size:13px;transform:scaleX(0.9682)">400</div>
<div class="t" style="left:1045.80px;top:128.00px;font-size:13px;transform:scaleX(0.9682)">700</div>
<div class="t" style="left:1129.80px;top:128.00px;font-size:13px;color:#006100;transform:scaleX(0.9682)">670</div>
<div class="t" style="left:36.80px;top:148.00px;font-size:13px;transform:scaleX(1.0548)">2/02/2015</div>
<div class="t" style="left:102.50px;top:148.00px;font-size:13px;transform:scaleX(1.0782)">leeman</div>
<div class="t" style="left:286.80px;top:148.00px;font-size:13px;transform:scaleX(0.9682)">60198</div>
<div class="t" style="left:371.80px;top:148.00px;font-size:13px;transform:scaleX(0.9682)">10054</div>
<div class="t" style="left:455.80px;top:148.00px;font-size:13px;transform:scaleX(0.9682)">82320</div>
<div class="t" style="left:517.80px;top:148.00px;font-size:13px;transform:scaleX(0.9682)">19120</div>
<div class="t" style="left:607.80px;top:148.00px;font-size:13px;transform:scaleX(0.9881)">13,6</div>
<div class="t" style="left:685.80px;top:148.00px;font-size:13px;transform:scaleX(0.9682)">0</div>
<div class="t" style="left:761.80px;top:148.00px;font-size:13px;transform:scaleX(0.9881)">13,6</div>
<div class="t" style="left:832.80px;top:148.00px;font-size:13px;transform:scaleX(0.9881)">11,4</div>
<div class="t" style="left:882.80px;top:148.00px;font-size:13px;transform:scaleX(0.9808)">17,664</div>
<div class="t" style="left:987.80px;top:148.00px;font-size:13px;transform:scaleX(0.9682)">0</div>
<div class="t" style="left:1045.80px;top:148.00px;font-size:13px;transform:scaleX(0.9682)">400</div>
<div class="t" style="left:1129.80px;top:148.00px;font-size:13px;color:#006100;transform:scaleX(0.9682)">335</div>
<div class="t" style="left:36.80px;top:168.00px;font-size:13px;transform:scaleX(1.0548)">2/02/2015</div>
<div class="t" style="left:102.50px;top:168.00px;font-size:13px;transform:scaleX(1.0305)">simon1205</div>
<div class="t" style="left:293.80px;top:168.00px;font-size:13px;transform:scaleX(0.9682)">2240</div>
<div class="t" style="left:385.80px;top:168.00px;font-size:13px;transform:scaleX(0.9682)">384</div>
<div class="t" style="left:462.80px;top:168.00px;font-size:13px;transform:scaleX(0.9682)">3168</div>
<div class="t" style="left:531.80px;top:168.00px;font-size:13px;transform:scaleX(0.9682)">960</div>
<div class="t" style="left:607.80px;top:168.00px;font-size:13px;transform:scaleX(0.9881)">59,5</div>
<div class="t" style="left:678.80px;top:168.00px;font-size:13px;transform:scaleX(0.9682)">30</div>
<div class="t" style="left:768.80px;top:168.00px;font-size:13px;transform:scaleX(0.9960)">9,6</div>
<div class="t" style="left:843.80px;top:168.00px;font-size:13px;transform:scaleX(0.9682)">22</div>
<div class="t" style="left:903.80px;top:168.00px;font-size:13px;transform:scaleX(0.9960)">2,2</div>
<div class="t" style="left:966.80px;top:168.00px;font-size:13px;transform:scaleX(0.9682)">1600</div>
<div class="t" style="left:1038.80px;top:168.00px;font-size:13px;transform:scaleX(0.9682)">8000</div>
<div class="t" style="left:1120.20px;top:168.00px;font-size:13px;color:#006100;transform:scaleX(0.9406)">7 727</div>
<div class="t" style="left:36.80px;top:188.00px;font-size:13px;transform:scaleX(1.0548)">2/02/2015</div>
<div class="t" style="left:102.50px;top:188.00px;font-size:13px;transform:scaleX(1.0496)">Kenniey</div>
<div class="t" style="left:286.80px;top:188.00px;font-size:13px;transform:scaleX(0.9682)">30063</div>
<div class="t" style="left:371.80px;top:188.00px;font-size:13px;transform:scaleX(0.9682)">10049</div>
<div class="t" style="left:455.80px;top:188.00px;font-size:13px;transform:scaleX(0.9682)">60537</div>
<div class="t" style="left:517.80px;top:188.00px;font-size:13px;transform:scaleX(0.9682)">10049</div>
<div class="t" style="left:618.80px;top:188.00px;font-size:13px;transform:scaleX(0.9682)">12</div>
<div class="t" style="left:685.80px;top:188.00px;font-size:13px;transform:scaleX(0.9682)">0</div>
<div class="t" style="left:761.80px;top:188.00px;font-size:13px;transform:scaleX(0.9881)">16,4</div>
<div class="t" style="left:850.80px;top:188.00px;font-size:13px;transform:scaleX(0.9682)">0</div>
<div class="t" style="left:882.80px;top:188.00px;font-size:13px;transform:scaleX(0.9808)">17,664</div>
<div class="t" style="left:987.80px;top:188.00px;font-size:13px;transform:scaleX(0.9682)">0</div>
<div class="t" style="left:1045.80px;top:188.00px;font-size:13px;transform:scaleX(0.9682)">400</div>
<div class="t" style="left:1129.80px;top:188.00px;font-size:13px;color:#006100;transform:scaleX(0.9682)">295</div>
<div class="t" style="left:36.80px;top:208.00px;font-size:13px;transform:scaleX(1.0548)">2/02/2015</div>
<div class="t" style="left:102.50px;top:208.00px;font-size:13px;transform:scaleX(1.0868)">brampiec</div>
<div class="t" style="left:286.80px;top:208.00px;font-size:13px;transform:scaleX(0.9682)">50200</div>
<div class="t" style="left:371.80px;top:208.00px;font-size:13px;transform:scaleX(0.9682)">10054</div>
<div class="t" style="left:455.80px;top:208.00px;font-size:13px;transform:scaleX(0.9682)">52851</div>
<div class="t" style="left:517.80px;top:208.00px;font-size:13px;transform:scaleX(0.9682)">10054</div>
<div class="t" style="left:618.80px;top:208.00px;font-size:13px;transform:scaleX(0.9682)">11</div>
<div class="t" style="left:685.80px;top:208.00px;font-size:13px;transform:scaleX(0.9682)">0</div>
<div class="t" style="left:768.80px;top:208.00px;font-size:13px;transform:scaleX(0.9960)">6,8</div>
<div class="t" style="left:850.80px;top:208.00px;font-size:13px;transform:scaleX(0.9682)">0</div>
<div class="t" style="left:882.80px;top:208.00px;font-size:13px;transform:scaleX(0.9808)">17,664</div>
<div class="t" style="left:987.80px;top:208.00px;font-size:13px;transform:scaleX(0.9682)">0</div>
<div class="t" style="left:1045.80px;top:208.00px;font-size:13px;transform:scaleX(0.9682)">400</div>
<div class="t" style="left:1129.80px;top:208.00px;font-size:13px;color:#006100;transform:scaleX(0.9682)">271</div>
<div class="t" style="left:36.80px;top:228.00px;font-size:13px;transform:scaleX(1.0548)">3/02/2015</div>
<div class="t" style="left:102.50px;top:228.00px;font-size:13px;transform:scaleX(1.0699)">cyberbug</div>
<div class="t" style="left:286.80px;top:228.00px;font-size:13px;transform:scaleX(0.9682)">50199</div>
<div class="t" style="left:371.80px;top:228.00px;font-size:13px;transform:scaleX(0.9682)">10004</div>
<div class="t" style="left:455.80px;top:228.00px;font-size:13px;transform:scaleX(0.9682)">56266</div>
<div class="t" style="left:607.80px;top:228.00px;font-size:13px;transform:scaleX(0.9881)">13,3</div>
<div class="t" style="left:685.80px;top:228.00px;font-size:13px;transform:scaleX(0.9682)">0</div>
<div class="t" style="left:768.80px;top:228.00px;font-size:13px;transform:scaleX(0.9960)">8,7</div>
<div class="t" style="left:850.80px;top:228.00px;font-size:13px;transform:scaleX(0.9682)">8</div>
<div class="t" style="left:882.80px;top:228.00px;font-size:13px;transform:scaleX(0.9808)">17,664</div>
<div class="t" style="left:987.80px;top:228.00px;font-size:13px;transform:scaleX(0.9682)">0</div>
<div class="t" style="left:1045.80px;top:228.00px;font-size:13px;transform:scaleX(0.9682)">400</div>
<div class="t" style="left:1129.80px;top:228.00px;font-size:13px;color:#006100;transform:scaleX(0.9682)">327</div>
<div class="t" style="left:36.80px;top:248.00px;font-size:13px;transform:scaleX(1.0548)">3/02/2015</div>
<div class="t" style="left:102.50px;top:248.00px;font-size:13px;transform:scaleX(1.0751)">dejean</div>
<div class="t" style="left:286.80px;top:248.00px;font-size:13px;transform:scaleX(0.9682)">69999</div>
<div class="t" style="left:378.80px;top:248.00px;font-size:13px;transform:scaleX(0.9682)">6063</div>
<div class="t" style="left:448.80px;top:248.00px;font-size:13px;transform:scaleX(0.9682)">136746</div>
<div class="t" style="left:517.80px;top:248.00px;font-size:13px;transform:scaleX(0.9682)">31978</div>
<div class="t" style="left:618.80px;top:248.00px;font-size:13px;transform:scaleX(0.9682)">12</div>
<div class="t" style="left:685.80px;top:248.00px;font-size:13px;transform:scaleX(0.9682)">0</div>
<div class="t" style="left:761.80px;top:248.00px;font-size:13px;transform:scaleX(0.9881)">27,8</div>
<div class="t" style="left:832.80px;top:248.00px;font-size:13px;transform:scaleX(0.9881)">23,9</div>
<div class="t" style="left:882.80px;top:248.00px;font-size:13px;transform:scaleX(0.9808)">17,664</div>
<div class="t" style="left:987.80px;top:248.00px;font-size:13px;transform:scaleX(0.9682)">0</div>
<div class="t" style="left:1045.80px;top:248.00px;font-size:13px;transform:scaleX(0.9682)">400</div>
<div class="t" style="left:1129.80px;top:248.00px;font-size:13px;color:#006100;transform:scaleX(0.9682)">295</div>
<div class="t" style="left:36.80px;top:268.00px;font-size:13px;transform:scaleX(1.0548)">3/02/2015</div>
<div class="t" style="left:102.50px;top:268.00px;font-size:13px;transform:scaleX(1.0252)">marc_1956</div>
<div class="t" style="left:286.80px;top:268.00px;font-size:13px;transform:scaleX(0.9682)">30063</div>
<div class="t" style="left:378.80px;top:268.00px;font-size:13px;transform:scaleX(0.9682)">2063</div>
<div class="t" style="left:455.80px;top:268.00px;font-size:13px;transform:scaleX(0.9682)">59769</div>
<div class="t" style="left:524.80px;top:268.00px;font-size:13px;transform:scaleX(0.9682)">8216</div>
<div class="t" style="left:607.80px;top:268.00px;font-size:13px;transform:scaleX(0.9881)">13,4</div>
<div class="t" style="left:685.80px;top:268.00px;font-size:13px;transform:scaleX(0.9682)">0</div>
<div class="t" style="left:761.80px;top:268.00px;font-size:13px;transform:scaleX(0.9881)">23,8</div>
<div class="t" style="left:832.80px;top:268.00px;font-size:13px;transform:scaleX(0.9881)">20,5</div>
<div class="t" style="left:889.80px;top:268.00px;font-size:13px;transform:scaleX(0.9837)">8,832</div>
<div class="t" style="left:973.80px;top:268.00px;font-size:13px;transform:scaleX(0.9682)">400</div>
<div class="t" style="left:1045.80px;top:268.00px;font-size:13px;transform:scaleX(0.9682)">700</div>
<div class="t" style="left:1129.80px;top:268.00px;font-size:13px;color:#006100;transform:scaleX(0.9682)">660</div>
<div class="t" style="left:36.80px;top:288.00px;font-size:13px;transform:scaleX(1.0548)">3/02/2015</div>
<div class="t" style="left:102.50px;top:288.00px;font-size:13px;transform:scaleX(1.0842)">thomasv</div>
<div class="t" style="left:286.80px;top:288.00px;font-size:13px;transform:scaleX(0.9682)">60198</div>
<div class="t" style="left:371.80px;top:288.00px;font-size:13px;transform:scaleX(0.9682)">10004</div>
<div class="t" style="left:455.80px;top:288.00px;font-size:13px;transform:scaleX(0.9682)">70171</div>
<div class="t" style="left:517.80px;top:288.00px;font-size:13px;transform:scaleX(0.9682)">10004</div>
<div class="t" style="left:607.80px;top:288.00px;font-size:13px;transform:scaleX(0.9881)">13,3</div>
<div class="t" style="left:685.80px;top:288.00px;font-size:13px;transform:scaleX(0.9682)">0</div>
<div class="t" style="left:768.80px;top:288.00px;font-size:13px;transform:scaleX(0.9960)">9,2</div>
<div class="t" style="left:850.80px;top:288.00px;font-size:13px;transform:scaleX(0.9682)">0</div>
<div class="t" style="left:882.80px;top:288.00px;font-size:13px;transform:scaleX(0.9808)">17,664</div>
<div class="t" style="left:987.80px;top:288.00px;font-size:13px;transform:scaleX(0.9682)">0</div>
<div class="t" style="left:1045.80px;top:288.00px;font-size:13px;transform:scaleX(0.9682)">400</div>
<div class="t" style="left:1129.80px;top:288.00px;font-size:13px;color:#006100;transform:scaleX(0.9682)">327</div>
<div class="t" style="left:36.80px;top:308.00px;font-size:13px;transform:scaleX(1.0548)">3/02/2015</div>
<div class="t" style="left:102.50px;top:308.00px;font-size:13px;transform:scaleX(1.0795)">jantje81</div>
<div class="t" style="left:286.80px;top:308.00px;font-size:13px;transform:scaleX(0.9682)">60198</div>
<div class="t" style="left:371.80px;top:308.00px;font-size:13px;transform:scaleX(0.9682)">10049</div>
<div class="t" style="left:455.80px;top:308.00px;font-size:13px;transform:scaleX(0.9682)">74348</div>
<div class="t" style="left:517.80px;top:308.00px;font-size:13px;transform:scaleX(0.9682)">10049</div>
<div class="t" style="left:607.80px;top:308.00px;font-size:13px;transform:scaleX(0.9881)">12,5</div>
<div class="t" style="left:685.80px;top:308.00px;font-size:13px;transform:scaleX(0.9682)">0</div>
<div class="t" style="left:761.80px;top:308.00px;font-size:13px;transform:scaleX(0.9881)">10,5</div>
<div class="t" style="left:850.80px;top:308.00px;font-size:13px;transform:scaleX(0.9682)">0</div>
<div class="t" style="left:882.80px;top:308.00px;font-size:13px;transform:scaleX(0.9808)">17,664</div>
<div class="t" style="left:987.80px;top:308.00px;font-size:13px;transform:scaleX(0.9682)">0</div>
<div class="t" style="left:1045.80px;top:308.00px;font-size:13px;transform:scaleX(0.9682)">400</div>
<div class="t" style="left:1129.80px;top:308.00px;font-size:13px;color:#006100;transform:scaleX(0.9682)">308</div>
<div class="t" style="left:36.80px;top:328.00px;font-size:13px;transform:scaleX(1.0548)">4/02/2015</div>
<div class="t" style="left:102.50px;top:328.00px;font-size:13px;transform:scaleX(1.0451)">D3bian</div>
<div class="t" style="left:286.80px;top:328.00px;font-size:13px;transform:scaleX(0.9682)">69999</div>
<div class="t" style="left:371.80px;top:328.00px;font-size:13px;transform:scaleX(0.9682)">10054</div>
<div class="t" style="left:455.80px;top:328.00px;font-size:13px;transform:scaleX(0.9682)">89533</div>
<div class="t" style="left:517.80px;top:328.00px;font-size:13px;transform:scaleX(0.9682)">10054</div>
<div class="t" style="left:614.80px;top:328.00px;font-size:13px;transform:scaleX(0.9960)">6,8</div>
<div class="t" style="left:685.80px;top:328.00px;font-size:13px;transform:scaleX(0.9682)">0</div>
<div class="t" style="left:761.80px;top:328.00px;font-size:13px;transform:scaleX(0.9881)">13,3</div>
<div class="t" style="left:850.80px;top:328.00px;font-size:13px;transform:scaleX(0.9682)">0</div>
<div class="t" style="left:882.80px;top:328.00px;font-size:13px;transform:scaleX(0.9808)">17,664</div>
<div class="t" style="left:987.80px;top:328.00px;font-size:13px;transform:scaleX(0.9682)">0</div>
<div class="t" style="left:1045.80px;top:328.00px;font-size:13px;transform:scaleX(0.9682)">400</div>
<div class="t" style="left:1129.80px;top:328.00px;font-size:13px;color:#006100;transform:scaleX(0.9682)">167</div>
<div class="t" style="left:36.80px;top:348.00px;font-size:13px;transform:scaleX(1.0548)">4/02/2015</div>
<div class="t" style="left:102.50px;top:348.00px;font-size:13px;transform:scaleX(1.0754)">sirWizard</div>
<div class="t" style="left:286.80px;top:348.00px;font-size:13px;transform:scaleX(0.9682)">69999</div>
<div class="t" style="left:371.80px;top:348.00px;font-size:13px;transform:scaleX(0.9682)">10064</div>
<div class="t" style="left:448.80px;top:348.00px;font-size:13px;transform:scaleX(0.9682)">131703</div>
<div class="t" style="left:517.80px;top:348.00px;font-size:13px;transform:scaleX(0.9682)">26748</div>
<div class="t" style="left:614.80px;top:348.00px;font-size:13px;transform:scaleX(0.9960)">6,6</div>
<div class="t" style="left:685.80px;top:348.00px;font-size:13px;transform:scaleX(0.9682)">0</div>
<div class="t" style="left:761.80px;top:348.00px;font-size:13px;transform:scaleX(0.9881)">24,1</div>
<div class="t" style="left:832.80px;top:348.00px;font-size:13px;transform:scaleX(0.9881)">16,2</div>
<div class="t" style="left:882.80px;top:348.00px;font-size:13px;transform:scaleX(0.9808)">17,664</div>
<div class="t" style="left:987.80px;top:348.00px;font-size:13px;transform:scaleX(0.9682)">0</div>
<div class="t" style="left:1045.80px;top:348.00px;font-size:13px;transform:scaleX(0.9682)">400</div>
<div class="t" style="left:1129.80px;top:348.00px;font-size:13px;color:#006100;transform:scaleX(0.9682)">162</div>
<div class="t" style="left:36.80px;top:368.00px;font-size:13px;transform:scaleX(1.0548)">4/02/2015</div>
<div class="t" style="left:102.50px;top:368.00px;font-size:13px;transform:scaleX(1.0641)">chamastam</div>
<div class="t" style="left:286.80px;top:368.00px;font-size:13px;transform:scaleX(0.9682)">30063</div>
<div class="t" style="left:371.80px;top:368.00px;font-size:13px;transform:scaleX(0.9682)">10054</div>
<div class="t" style="left:455.80px;top:368.00px;font-size:13px;transform:scaleX(0.9682)">70728</div>
<div class="t" style="left:517.80px;top:368.00px;font-size:13px;transform:scaleX(0.9682)">14440</div>
<div class="t" style="left:607.80px;top:368.00px;font-size:13px;transform:scaleX(0.9881)">14,3</div>
<div class="t" style="left:685.80px;top:368.00px;font-size:13px;transform:scaleX(0.9682)">0</div>
<div class="t" style="left:761.80px;top:368.00px;font-size:13px;transform:scaleX(0.9881)">19,8</div>
<div class="t" style="left:839.80px;top:368.00px;font-size:13px;transform:scaleX(0.9960)">9,4</div>
<div class="t" style="left:882.80px;top:368.00px;font-size:13px;transform:scaleX(0.9808)">17,664</div>
<div class="t" style="left:987.80px;top:368.00px;font-size:13px;transform:scaleX(0.9682)">0</div>
<div class="t" style="left:1045.80px;top:368.00px;font-size:13px;transform:scaleX(0.9682)">400</div>
<div class="t" style="left:1129.80px;top:368.00px;font-size:13px;color:#006100;transform:scaleX(0.9682)">352</div>
<div class="t" style="left:36.80px;top:388.00px;font-size:13px;transform:scaleX(1.0548)">4/02/2015</div>
<div class="t" style="left:102.50px;top:388.00px;font-size:13px;transform:scaleX(1.0529)">crazydavid</div>
<div class="t" style="left:286.80px;top:388.00px;font-size:13px;transform:scaleX(0.9682)">16550</div>
<div class="t" style="left:378.80px;top:388.00px;font-size:13px;transform:scaleX(0.9682)">2054</div>
<div class="t" style="left:455.80px;top:388.00px;font-size:13px;transform:scaleX(0.9682)">31917</div>
<div class="t" style="left:524.80px;top:388.00px;font-size:13px;transform:scaleX(0.9682)">2054</div>
<div class="t" style="left:607.80px;top:388.00px;font-size:13px;transform:scaleX(0.9881)">17,4</div>
<div class="t" style="left:685.80px;top:388.00px;font-size:13px;transform:scaleX(0.9682)">0</div>
<div class="t" style="left:761.80px;top:388.00px;font-size:13px;transform:scaleX(0.9881)">16,3</div>
<div class="t" style="left:850.80px;top:388.00px;font-size:13px;transform:scaleX(0.9682)">0</div>
<div class="t" style="left:889.80px;top:388.00px;font-size:13px;transform:scaleX(0.9837)">8,832</div>
<div class="t" style="left:973.80px;top:388.00px;font-size:13px;transform:scaleX(0.9682)">700</div>
<div class="t" style="left:1038.80px;top:388.00px;font-size:13px;transform:scaleX(0.9682)">1000</div>
<div class="t" style="left:1129.80px;top:388.00px;font-size:13px;color:#006100;transform:scaleX(0.9682)">857</div>
<div class="t" style="left:36.80px;top:408.00px;font-size:13px;transform:scaleX(1.0548)">4/02/2015</div>
<div class="t" style="left:102.50px;top:408.00px;font-size:13px;transform:scaleX(1.0674)">Nicopara</div>
<div class="t" style="left:286.80px;top:408.00px;font-size:13px;transform:scaleX(0.9682)">20061</div>
<div class="t" style="left:378.80px;top:408.00px;font-size:13px;transform:scaleX(0.9682)">2063</div>
<div class="t" style="left:455.80px;top:408.00px;font-size:13px;transform:scaleX(0.9682)">29013</div>
<div class="t" style="left:524.80px;top:408.00px;font-size:13px;transform:scaleX(0.9682)">5907</div>
<div class="t" style="left:607.80px;top:408.00px;font-size:13px;transform:scaleX(0.9881)">15,2</div>
<div class="t" style="left:685.80px;top:408.00px;font-size:13px;transform:scaleX(0.9682)">0</div>
<div class="t" style="left:761.80px;top:408.00px;font-size:13px;transform:scaleX(0.9881)">11,1</div>
<div class="t" style="left:832.80px;top:408.00px;font-size:13px;transform:scaleX(0.9881)">14,6</div>
<div class="t" style="left:889.80px;top:408.00px;font-size:13px;transform:scaleX(0.9837)">8,832</div>
<div class="t" style="left:973.80px;top:408.00px;font-size:13px;transform:scaleX(0.9682)">400</div>
<div class="t" style="left:1045.80px;top:408.00px;font-size:13px;transform:scaleX(0.9682)">700</div>
<div class="t" style="left:1129.80px;top:408.00px;font-size:13px;color:#9c0006;transform:scaleX(0.9682)">748</div>
<div class="t" style="left:36.80px;top:428.00px;font-size:13px;transform:scaleX(1.0548)">4/02/2015</div>
<div class="t" style="left:102.50px;top:428.00px;font-size:13px;transform:scaleX(1.0528)">solitaire2511</div>
<div class="t" style="left:286.80px;top:428.00px;font-size:13px;transform:scaleX(0.9682)">12063</div>
<div class="t" style="left:378.80px;top:428.00px;font-size:13px;transform:scaleX(0.9682)">1044</div>
<div class="t" style="left:455.80px;top:428.00px;font-size:13px;transform:scaleX(0.9682)">22717</div>
<div class="t" style="left:607.80px;top:428.00px;font-size:13px;transform:scaleX(0.9881)">25,8</div>
<div class="t" style="left:685.80px;top:428.00px;font-size:13px;transform:scaleX(0.9682)">0</div>
<div class="t" style="left:761.80px;top:428.00px;font-size:13px;transform:scaleX(0.9881)">18,4</div>
<div class="t" style="left:832.80px;top:428.00px;font-size:13px;transform:scaleX(0.9881)">12,7</div>
<div class="t" style="left:889.80px;top:428.00px;font-size:13px;transform:scaleX(0.9837)">8,832</div>
<div class="t" style="left:966.80px;top:428.00px;font-size:13px;transform:scaleX(0.9682)">1000</div>
<div class="t" style="left:1038.80px;top:428.00px;font-size:13px;transform:scaleX(0.9682)">1400</div>
<div class="t" style="left:1120.20px;top:428.00px;font-size:13px;color:#006100;transform:scaleX(0.9406)">1 270</div>
<div class="t" style="left:36.80px;top:448.00px;font-size:13px;transform:scaleX(1.0548)">4/02/2015</div>
<div class="t" style="left:102.50px;top:448.00px;font-size:13px;transform:scaleX(1.0393)">mike888</div>
<div class="t" style="left:286.80px;top:448.00px;font-size:13px;transform:scaleX(0.9682)">25063</div>
<div class="t" style="left:378.80px;top:448.00px;font-size:13px;transform:scaleX(0.9682)">2045</div>
<div class="t" style="left:455.80px;top:448.00px;font-size:13px;transform:scaleX(0.9682)">32412</div>
<div class="t" style="left:524.80px;top:448.00px;font-size:13px;transform:scaleX(0.9682)">2045</div>
<div class="t" style="left:607.80px;top:448.00px;font-size:13px;transform:scaleX(0.9881)">14,1</div>
<div class="t" style="left:685.80px;top:448.00px;font-size:13px;transform:scaleX(0.9682)">0</div>
<div class="t" style="left:761.80px;top:448.00px;font-size:13px;transform:scaleX(0.9881)">10,3</div>
<div class="t" style="left:850.80px;top:448.00px;font-size:13px;transform:scaleX(0.9682)">0</div>
<div class="t" style="left:889.80px;top:448.00px;font-size:13px;transform:scaleX(0.9837)">8,832</div>
<div class="t" style="left:973.80px;top:448.00px;font-size:13px;transform:scaleX(0.9682)">400</div>
<div class="t" style="left:1045.80px;top:448.00px;font-size:13px;transform:scaleX(0.9682)">700</div>
<div class="t" style="left:1129.80px;top:448.00px;font-size:13px;color:#006100;transform:scaleX(0.9682)">694</div>
<div class="t" style="left:36.80px;top:468.00px;font-size:13px;transform:scaleX(1.0548)">4/02/2015</div>
<div class="t" style="left:102.50px;top:468.00px;font-size:13px;transform:scaleX(1.0948)">arowan</div>
<div class="t" style="left:293.80px;top:468.00px;font-size:13px;transform:scaleX(0.9682)">4448</div>
<div class="t" style="left:385.80px;top:468.00px;font-size:13px;transform:scaleX(0.9682)">512</div>
<div class="t" style="left:462.80px;top:468.00px;font-size:13px;transform:scaleX(0.9682)">4864</div>
<div class="t" style="left:607.80px;top:468.00px;font-size:13px;transform:scaleX(0.9881)">48,5</div>
<div class="t" style="left:685.80px;top:468.00px;font-size:13px;transform:scaleX(0.9682)">0</div>
<div class="t" style="left:768.80px;top:468.00px;font-size:13px;transform:scaleX(0.9960)">6,1</div>
<div class="t" style="left:843.80px;top:468.00px;font-size:13px;transform:scaleX(0.9682)">15</div>
<div class="t" style="left:903.80px;top:468.00px;font-size:13px;transform:scaleX(0.9960)">2,2</div>
<div class="t" style="left:966.80px;top:468.00px;font-size:13px;transform:scaleX(0.9682)">1600</div>
<div class="t" style="left:1038.80px;top:468.00px;font-size:13px;transform:scaleX(0.9682)">8000</div>
<div class="t" style="left:1120.20px;top:468.00px;font-size:13px;color:#006100;transform:scaleX(0.9406)">6 299</div>
<div class="t" style="left:36.80px;top:488.00px;font-size:13px;transform:scaleX(1.0548)">4/02/2015</div>
<div class="t" style="left:102.50px;top:488.00px;font-size:13px;transform:scaleX(1.0585)">servperso</div>
<div class="t" style="left:286.80px;top:488.00px;font-size:13px;transform:scaleX(0.9682)">50200</div>
<div class="t" style="left:371.80px;top:488.00px;font-size:13px;transform:scaleX(0.9682)">10049</div>
<div class="t" style="left:455.80px;top:488.00px;font-size:13px;transform:scaleX(0.9682)">72455</div>
<div class="t" style="left:517.80px;top:488.00px;font-size:13px;transform:scaleX(0.9682)">10049</div>
<div class="t" style="left:607.80px;top:488.00px;font-size:13px;transform:scaleX(0.9881)">12,6</div>
<div class="t" style="left:685.80px;top:488.00px;font-size:13px;transform:scaleX(0.9682)">0</div>
<div class="t" style="left:761.80px;top:488.00px;font-size:13px;transform:scaleX(0.9881)">13,1</div>
<div class="t" style="left:850.80px;top:488.00px;font-size:13px;transform:scaleX(0.9682)">0</div>
<div class="t" style="left:882.80px;top:488.00px;font-size:13px;transform:scaleX(0.9808)">17,664</div>
<div class="t" style="left:987.80px;top:488.00px;font-size:13px;transform:scaleX(0.9682)">0</div>
<div class="t" style="left:1045.80px;top:488.00px;font-size:13px;transform:scaleX(0.9682)">400</div>
<div class="t" style="left:1129.80px;top:488.00px;font-size:13px;color:#006100;transform:scaleX(0.9682)">310</div>
<div class="t" style="left:36.80px;top:508.00px;font-size:13px;transform:scaleX(1.0548)">5/02/2015</div>
<div class="t" style="left:102.50px;top:508.00px;font-size:13px;transform:scaleX(0.9974)">Dizzy</div>
<div class="t" style="left:286.80px;top:508.00px;font-size:13px;transform:scaleX(0.9682)">30063</div>
<div class="t" style="left:378.80px;top:508.00px;font-size:13px;transform:scaleX(0.9682)">2045</div>
<div class="t" style="left:455.80px;top:508.00px;font-size:13px;transform:scaleX(0.9682)">55497</div>
<div class="t" style="left:524.80px;top:508.00px;font-size:13px;transform:scaleX(0.9682)">4976</div>
<div class="t" style="left:614.80px;top:508.00px;font-size:13px;transform:scaleX(0.9960)">8,3</div>
<div class="t" style="left:685.80px;top:508.00px;font-size:13px;transform:scaleX(0.9682)">0</div>
<div class="t" style="left:772.80px;top:508.00px;font-size:13px;transform:scaleX(0.9682)">21</div>
<div class="t" style="left:843.80px;top:508.00px;font-size:13px;transform:scaleX(0.9682)">16</div>
<div class="t" style="left:889.80px;top:508.00px;font-size:13px;transform:scaleX(0.9837)">8,832</div>
<div class="t" style="left:973.80px;top:508.00px;font-size:13px;transform:scaleX(0.9682)">400</div>
<div class="t" style="left:1045.80px;top:508.00px;font-size:13px;transform:scaleX(0.9682)">700</div>
<div class="t" style="left:1129.80px;top:508.00px;font-size:13px;color:#006100;transform:scaleX(0.9682)">409</div>
<div class="t" style="left:36.80px;top:528.00px;font-size:13px;transform:scaleX(1.0548)">6/05/2015</div>
<div class="t" style="left:102.50px;top:528.00px;font-size:13px;transform:scaleX(1.1157)">mrombouts</div>
<div class="t" style="left:286.80px;top:528.00px;font-size:13px;transform:scaleX(0.9682)">69999</div>
<div class="t" style="left:371.80px;top:528.00px;font-size:13px;transform:scaleX(0.9682)">10054</div>
<div class="t" style="left:455.80px;top:528.00px;font-size:13px;transform:scaleX(0.9682)">81218</div>
<div class="t" style="left:517.80px;top:528.00px;font-size:13px;transform:scaleX(0.9682)">10054</div>
<div class="t" style="left:607.80px;top:528.00px;font-size:13px;transform:scaleX(0.9881)">14,5</div>
<div class="t" style="left:685.80px;top:528.00px;font-size:13px;transform:scaleX(0.9682)">0</div>
<div class="t" style="left:768.80px;top:528.00px;font-size:13px;transform:scaleX(0.9960)">9,8</div>
<div class="t" style="left:850.80px;top:528.00px;font-size:13px;transform:scaleX(0.9682)">0</div>
<div class="t" style="left:882.80px;top:528.00px;font-size:13px;transform:scaleX(0.9808)">17,664</div>
<div class="t" style="left:987.80px;top:528.00px;font-size:13px;transform:scaleX(0.9682)">0</div>
<div class="t" style="left:1045.80px;top:528.00px;font-size:13px;transform:scaleX(0.9682)">400</div>
<div class="t" style="left:1129.80px;top:528.00px;font-size:13px;color:#006100;transform:scaleX(0.9682)">357</div>
<div class="t" style="left:29.80px;top:548.00px;font-size:13px;transform:scaleX(1.0451)">11/02/2015</div>
<div class="t" style="left:102.50px;top:548.00px;font-size:13px;transform:scaleX(1.0245)">geodu7000</div>
<div class="t" style="left:286.80px;top:548.00px;font-size:13px;transform:scaleX(0.9682)">69999</div>
<div class="t" style="left:378.80px;top:548.00px;font-size:13px;transform:scaleX(0.9682)">6063</div>
<div class="t" style="left:448.80px;top:548.00px;font-size:13px;transform:scaleX(0.9682)">133859</div>
<div class="t" style="left:517.80px;top:548.00px;font-size:13px;transform:scaleX(0.9682)">30942</div>
<div class="t" style="left:607.80px;top:548.00px;font-size:13px;transform:scaleX(0.9881)">11,8</div>
<div class="t" style="left:685.80px;top:548.00px;font-size:13px;transform:scaleX(0.9682)">0</div>
<div class="t" style="left:761.80px;top:548.00px;font-size:13px;transform:scaleX(0.9881)">25,2</div>
<div class="t" style="left:843.80px;top:548.00px;font-size:13px;transform:scaleX(0.9682)">23</div>
<div class="t" style="left:882.80px;top:548.00px;font-size:13px;transform:scaleX(0.9808)">17,664</div>
<div class="t" style="left:987.80px;top:548.00px;font-size:13px;transform:scaleX(0.9682)">0</div>
<div class="t" style="left:1045.80px;top:548.00px;font-size:13px;transform:scaleX(0.9682)">400</div>
<div class="t" style="left:1129.80px;top:548.00px;font-size:13px;color:#006100;transform:scaleX(0.9682)">290</div>
<div class="t" style="left:29.80px;top:568.00px;font-size:13px;transform:scaleX(1.0451)">11/02/2015</div>
<div class="t" style="left:102.50px;top:568.00px;font-size:13px;transform:scaleX(1.0638)">Trevelian</div>
<div class="t" style="left:286.80px;top:568.00px;font-size:13px;transform:scaleX(0.9682)">30057</div>
<div class="t" style="left:378.80px;top:568.00px;font-size:13px;transform:scaleX(0.9682)">2045</div>
<div class="t" style="left:455.80px;top:568.00px;font-size:13px;transform:scaleX(0.9682)">43509</div>
<div class="t" style="left:524.80px;top:568.00px;font-size:13px;transform:scaleX(0.9682)">2045</div>
<div class="t" style="left:607.80px;top:568.00px;font-size:13px;transform:scaleX(0.9881)">14,6</div>
<div class="t" style="left:685.80px;top:568.00px;font-size:13px;transform:scaleX(0.9682)">0</div>
<div class="t" style="left:761.80px;top:568.00px;font-size:13px;transform:scaleX(0.9881)">23,2</div>
<div class="t" style="left:850.80px;top:568.00px;font-size:13px;transform:scaleX(0.9682)">0</div>
<div class="t" style="left:889.80px;top:568.00px;font-size:13px;transform:scaleX(0.9837)">8,832</div>
<div class="t" style="left:973.80px;top:568.00px;font-size:13px;transform:scaleX(0.9682)">400</div>
<div class="t" style="left:1045.80px;top:568.00px;font-size:13px;transform:scaleX(0.9682)">700</div>
<div class="t" style="left:1129.80px;top:568.00px;font-size:13px;color:#9c0006;transform:scaleX(0.9682)">719</div>
<div class="t" style="left:29.80px;top:588.00px;font-size:13px;transform:scaleX(1.0451)">12/02/2015</div>
<div class="t" style="left:102.50px;top:588.00px;font-size:13px;transform:scaleX(1.0946)">hardyscript</div>
<div class="t" style="left:286.80px;top:588.00px;font-size:13px;transform:scaleX(0.9682)">30057</div>
<div class="t" style="left:378.80px;top:588.00px;font-size:13px;transform:scaleX(0.9682)">2045</div>
<div class="t" style="left:455.80px;top:588.00px;font-size:13px;transform:scaleX(0.9682)">43522</div>
<div class="t" style="left:607.80px;top:588.00px;font-size:13px;transform:scaleX(0.9881)">17,8</div>
<div class="t" style="left:685.80px;top:588.00px;font-size:13px;transform:scaleX(0.9682)">0</div>
<div class="t" style="left:761.80px;top:588.00px;font-size:13px;transform:scaleX(0.9881)">15,3</div>
<div class="t" style="left:843.80px;top:588.00px;font-size:13px;transform:scaleX(0.9682)">17</div>
<div class="t" style="left:889.80px;top:588.00px;font-size:13px;transform:scaleX(0.9837)">8,832</div>
<div class="t" style="left:973.80px;top:588.00px;font-size:13px;transform:scaleX(0.9682)">400</div>
<div class="t" style="left:1045.80px;top:588.00px;font-size:13px;transform:scaleX(0.9682)">700</div>
<div class="t" style="left:1129.80px;top:588.00px;font-size:13px;color:#9c0006;transform:scaleX(0.9682)">876</div>
<div class="t" style="left:29.80px;top:608.00px;font-size:13px;transform:scaleX(1.0451)">12/02/2015</div>
<div class="t" style="left:102.50px;top:608.00px;font-size:13px;transform:scaleX(1.0528)">solitaire2511</div>
<div class="t" style="left:286.80px;top:608.00px;font-size:13px;transform:scaleX(0.9682)">16559</div>
<div class="t" style="left:378.80px;top:608.00px;font-size:13px;transform:scaleX(0.9682)">1044</div>
<div class="t" style="left:455.80px;top:608.00px;font-size:13px;transform:scaleX(0.9682)">21957</div>
<div class="t" style="left:524.80px;top:608.00px;font-size:13px;transform:scaleX(0.9682)">1044</div>
<div class="t" style="left:607.80px;top:608.00px;font-size:13px;transform:scaleX(0.9881)">25,8</div>
<div class="t" style="left:685.80px;top:608.00px;font-size:13px;transform:scaleX(0.9682)">0</div>
<div class="t" style="left:761.80px;top:608.00px;font-size:13px;transform:scaleX(0.9881)">12,4</div>
<div class="t" style="left:850.80px;top:608.00px;font-size:13px;transform:scaleX(0.9682)">0</div>
<div class="t" style="left:889.80px;top:608.00px;font-size:13px;transform:scaleX(0.9837)">8,832</div>
<div class="t" style="left:966.80px;top:608.00px;font-size:13px;transform:scaleX(0.9682)">1000</div>
<div class="t" style="left:1038.80px;top:608.00px;font-size:13px;transform:scaleX(0.9682)">1400</div>
<div class="t" style="left:1120.20px;top:608.00px;font-size:13px;color:#006100;transform:scaleX(0.9406)">1 270</div>
<div class="t" style="left:29.80px;top:628.00px;font-size:13px;transform:scaleX(1.0451)">12/02/2015</div>
<div class="t" style="left:102.50px;top:628.00px;font-size:13px;transform:scaleX(1.0594)">Patje</div>
<div class="t" style="left:286.80px;top:628.00px;font-size:13px;transform:scaleX(0.9682)">20061</div>
<div class="t" style="left:378.80px;top:628.00px;font-size:13px;transform:scaleX(0.9682)">2042</div>
<div class="t" style="left:455.80px;top:628.00px;font-size:13px;transform:scaleX(0.9682)">43968</div>
<div class="t" style="left:524.80px;top:628.00px;font-size:13px;transform:scaleX(0.9682)">2042</div>
<div class="t" style="left:607.80px;top:628.00px;font-size:13px;transform:scaleX(0.9881)">13,7</div>
<div class="t" style="left:685.80px;top:628.00px;font-size:13px;transform:scaleX(0.9682)">0</div>
<div class="t" style="left:772.80px;top:628.00px;font-size:13px;transform:scaleX(0.9682)">20</div>
<div class="t" style="left:850.80px;top:628.00px;font-size:13px;transform:scaleX(0.9682)">0</div>
<div class="t" style="left:889.80px;top:628.00px;font-size:13px;transform:scaleX(0.9837)">8,832</div>
<div class="t" style="left:973.80px;top:628.00px;font-size:13px;transform:scaleX(0.9682)">400</div>
<div class="t" style="left:1045.80px;top:628.00px;font-size:13px;transform:scaleX(0.9682)">700</div>
<div class="t" style="left:1129.80px;top:628.00px;font-size:13px;color:#006100;transform:scaleX(0.9682)">674</div>
<div class="t" style="left:29.80px;top:648.00px;font-size:13px;transform:scaleX(1.0451)">12/02/2015</div>
<div class="t" style="left:102.50px;top:648.00px;font-size:13px;transform:scaleX(1.0548)">TiTanium's buddy</div>
<div class="t" style="left:286.80px;top:648.00px;font-size:13px;transform:scaleX(0.9682)">69999</div>
<div class="t" style="left:371.80px;top:648.00px;font-size:13px;transform:scaleX(0.9682)">10064</div>
<div class="t" style="left:448.80px;top:648.00px;font-size:13px;transform:scaleX(0.9682)">127255</div>
<div class="t" style="left:517.80px;top:648.00px;font-size:13px;transform:scaleX(0.9682)">10064</div>
<div class="t" style="left:614.80px;top:648.00px;font-size:13px;transform:scaleX(0.9960)">6,1</div>
<div class="t" style="left:685.80px;top:648.00px;font-size:13px;transform:scaleX(0.9682)">0</div>
<div class="t" style="left:761.80px;top:648.00px;font-size:13px;transform:scaleX(0.9881)">23,1</div>
<div class="t" style="left:850.80px;top:648.00px;font-size:13px;transform:scaleX(0.9682)">0</div>
<div class="t" style="left:882.80px;top:648.00px;font-size:13px;transform:scaleX(0.9808)">17,664</div>
<div class="t" style="left:987.80px;top:648.00px;font-size:13px;transform:scaleX(0.9682)">0</div>
<div class="t" style="left:1045.80px;top:648.00px;font-size:13px;transform:scaleX(0.9682)">400</div>
<div class="t" style="left:1129.80px;top:648.00px;font-size:13px;color:#006100;transform:scaleX(0.9682)">150</div>
<div class="t" style="left:29.80px;top:668.00px;font-size:13px;transform:scaleX(1.0451)">13/02/2015</div>
<div class="t" style="left:102.50px;top:668.00px;font-size:13px;transform:scaleX(1.0192)">a3ke</div>
<div class="t" style="left:286.80px;top:668.00px;font-size:13px;transform:scaleX(0.9682)">69999</div>
<div class="t" style="left:371.80px;top:668.00px;font-size:13px;transform:scaleX(0.9682)">10064</div>
<div class="t" style="left:448.80px;top:668.00px;font-size:13px;transform:scaleX(0.9682)">134982</div>
<div class="t" style="left:517.80px;top:668.00px;font-size:13px;transform:scaleX(0.9682)">27808</div>
<div class="t" style="left:614.80px;top:668.00px;font-size:13px;transform:scaleX(0.9960)">7,6</div>
<div class="t" style="left:685.80px;top:668.00px;font-size:13px;transform:scaleX(0.9682)">0</div>
<div class="t" style="left:761.80px;top:668.00px;font-size:13px;transform:scaleX(0.9881)">26,3</div>
<div class="t" style="left:832.80px;top:668.00px;font-size:13px;transform:scaleX(0.9881)">16,9</div>
<div class="t" style="left:882.80px;top:668.00px;font-size:13px;transform:scaleX(0.9808)">17,664</div>
<div class="t" style="left:987.80px;top:668.00px;font-size:13px;transform:scaleX(0.9682)">0</div>
<div class="t" style="left:1045.80px;top:668.00px;font-size:13px;transform:scaleX(0.9682)">400</div>
<div class="t" style="left:1129.80px;top:668.00px;font-size:13px;color:#006100;transform:scaleX(0.9682)">187</div>
<div class="t" style="left:29.80px;top:688.00px;font-size:13px;transform:scaleX(1.0451)">26/02/2015</div>
<div class="t" style="left:102.50px;top:688.00px;font-size:13px;transform:scaleX(1.0751)">dejean</div>
<div class="t" style="left:286.80px;top:688.00px;font-size:13px;transform:scaleX(0.9682)">69999</div>
<div class="t" style="left:371.80px;top:688.00px;font-size:13px;transform:scaleX(0.9682)">10064</div>
<div class="t" style="left:448.80px;top:688.00px;font-size:13px;transform:scaleX(0.9682)">136266</div>
<div class="t" style="left:517.80px;top:688.00px;font-size:13px;transform:scaleX(0.9682)">32029</div>
<div class="t" style="left:618.80px;top:688.00px;font-size:13px;transform:scaleX(0.9682)">12</div>
<div class="t" style="left:685.80px;top:688.00px;font-size:13px;transform:scaleX(0.9682)">0</div>
<div class="t" style="left:761.80px;top:688.00px;font-size:13px;transform:scaleX(0.9881)">27,8</div>
<div class="t" style="left:832.80px;top:688.00px;font-size:13px;transform:scaleX(0.9881)">19,6</div>
<div class="t" style="left:882.80px;top:688.00px;font-size:13px;transform:scaleX(0.9808)">17,664</div>
<div class="t" style="left:987.80px;top:688.00px;font-size:13px;transform:scaleX(0.9682)">0</div>
<div class="t" style="left:1045.80px;top:688.00px;font-size:13px;transform:scaleX(0.9682)">400</div>
<div class="t" style="left:1129.80px;top:688.00px;font-size:13px;color:#006100;transform:scaleX(0.9682)">295</div>
<div class="t" style="left:29.80px;top:708.00px;font-size:13px;transform:scaleX(1.0451)">26/02/2015</div>
<div class="t" style="left:102.50px;top:708.00px;font-size:13px;transform:scaleX(1.0594)">Patje</div>
<div class="t" style="left:286.80px;top:708.00px;font-size:13px;transform:scaleX(0.9682)">20061</div>
<div class="t" style="left:378.80px;top:708.00px;font-size:13px;transform:scaleX(0.9682)">2043</div>
<div class="t" style="left:455.80px;top:708.00px;font-size:13px;transform:scaleX(0.9682)">45222</div>
<div class="t" style="left:524.80px;top:708.00px;font-size:13px;transform:scaleX(0.9682)">4600</div>
<div class="t" style="left:607.80px;top:708.00px;font-size:13px;transform:scaleX(0.9881)">13,7</div>
<div class="t" style="left:685.80px;top:708.00px;font-size:13px;transform:scaleX(0.9682)">0</div>
<div class="t" style="left:761.80px;top:708.00px;font-size:13px;transform:scaleX(0.9881)">20,6</div>
<div class="t" style="left:843.80px;top:708.00px;font-size:13px;transform:scaleX(0.9682)">16</div>
<div class="t" style="left:889.80px;top:708.00px;font-size:13px;transform:scaleX(0.9837)">8,832</div>
<div class="t" style="left:973.80px;top:708.00px;font-size:13px;transform:scaleX(0.9682)">400</div>
<div class="t" style="left:1045.80px;top:708.00px;font-size:13px;transform:scaleX(0.9682)">700</div>
<div class="t" style="left:1129.80px;top:708.00px;font-size:13px;color:#006100;transform:scaleX(0.9682)">674</div>
<div class="t" style="left:29.80px;top:728.00px;font-size:13px;transform:scaleX(1.0451)">26/02/2015</div>
<div class="t" style="left:102.50px;top:728.00px;font-size:13px;transform:scaleX(1.0201)">Pyro85</div>
<div class="t" style="left:286.80px;top:728.00px;font-size:13px;transform:scaleX(0.9682)">69999</div>
<div class="t" style="left:371.80px;top:728.00px;font-size:13px;transform:scaleX(0.9682)">10064</div>
<div class="t" style="left:448.80px;top:728.00px;font-size:13px;transform:scaleX(0.9682)">100723</div>
<div class="t" style="left:517.80px;top:728.00px;font-size:13px;transform:scaleX(0.9682)">14380</div>
<div class="t" style="left:607.80px;top:728.00px;font-size:13px;transform:scaleX(0.9881)">11,4</div>
<div class="t" style="left:685.80px;top:728.00px;font-size:13px;transform:scaleX(0.9682)">0</div>
<div class="t" style="left:761.80px;top:728.00px;font-size:13px;transform:scaleX(0.9881)">14,8</div>
<div class="t" style="left:839.80px;top:728.00px;font-size:13px;transform:scaleX(0.9960)">7,7</div>
<div class="t" style="left:882.80px;top:728.00px;font-size:13px;transform:scaleX(0.9808)">17,664</div>
<div class="t" style="left:987.80px;top:728.00px;font-size:13px;transform:scaleX(0.9682)">0</div>
<div class="t" style="left:1045.80px;top:728.00px;font-size:13px;transform:scaleX(0.9682)">400</div>
<div class="t" style="left:1129.80px;top:728.00px;font-size:13px;color:#006100;transform:scaleX(0.9682)">281</div>
<div class="t" style="left:29.80px;top:748.00px;font-size:13px;transform:scaleX(1.0451)">26/02/2015</div>
<div class="t" style="left:102.50px;top:748.00px;font-size:13px;transform:scaleX(1.1315)">oldjp</div>
<div class="t" style="left:286.80px;top:748.00px;font-size:13px;transform:scaleX(0.9682)">30063</div>
<div class="t" style="left:378.80px;top:748.00px;font-size:13px;transform:scaleX(0.9682)">2045</div>
<div class="t" style="left:455.80px;top:748.00px;font-size:13px;transform:scaleX(0.9682)">38789</div>
<div class="t" style="left:524.80px;top:748.00px;font-size:13px;transform:scaleX(0.9682)">5440</div>
<div class="t" style="left:614.80px;top:748.00px;font-size:13px;transform:scaleX(0.9960)">9,9</div>
<div class="t" style="left:685.80px;top:748.00px;font-size:13px;transform:scaleX(0.9682)">0</div>
<div class="t" style="left:772.80px;top:748.00px;font-size:13px;transform:scaleX(0.9682)">11</div>
<div class="t" style="left:832.80px;top:748.00px;font-size:13px;transform:scaleX(0.9881)">16,5</div>
<div class="t" style="left:889.80px;top:748.00px;font-size:13px;transform:scaleX(0.9837)">8,832</div>
<div class="t" style="left:973.80px;top:748.00px;font-size:13px;transform:scaleX(0.9682)">400</div>
<div class="t" style="left:1045.80px;top:748.00px;font-size:13px;transform:scaleX(0.9682)">700</div>
<div class="t" style="left:1129.80px;top:748.00px;font-size:13px;color:#006100;transform:scaleX(0.9682)">487</div>
<div class="t" style="left:29.80px;top:768.00px;font-size:13px;transform:scaleX(1.0451)">27/02/2015</div>
<div class="t" style="left:102.50px;top:768.00px;font-size:13px;transform:scaleX(1.0583)">Fallschirmjaeger</div>
<div class="t" style="left:286.80px;top:768.00px;font-size:13px;transform:scaleX(0.9682)">50200</div>
<div class="t" style="left:371.80px;top:768.00px;font-size:13px;transform:scaleX(0.9682)">10049</div>
<div class="t" style="left:455.80px;top:768.00px;font-size:13px;transform:scaleX(0.9682)">88009</div>
<div class="t" style="left:517.80px;top:768.00px;font-size:13px;transform:scaleX(0.9682)">10049</div>
<div class="t" style="left:625.80px;top:768.00px;font-size:13px;transform:scaleX(0.9682)">5</div>
<div class="t" style="left:685.80px;top:768.00px;font-size:13px;transform:scaleX(0.9682)">0</div>
<div class="t" style="left:772.80px;top:768.00px;font-size:13px;transform:scaleX(0.9682)">19</div>
<div class="t" style="left:850.80px;top:768.00px;font-size:13px;transform:scaleX(0.9682)">0</div>
<div class="t" style="left:882.80px;top:768.00px;font-size:13px;transform:scaleX(0.9808)">17,664</div>
<div class="t" style="left:987.80px;top:768.00px;font-size:13px;transform:scaleX(0.9682)">0</div>
<div class="t" style="left:1045.80px;top:768.00px;font-size:13px;transform:scaleX(0.9682)">400</div>
<div class="t" style="left:1129.80px;top:768.00px;font-size:13px;color:#006100;transform:scaleX(0.9682)">123</div>
<div class="t" style="left:29.80px;top:788.00px;font-size:13px;transform:scaleX(1.0451)">28/02/2015</div>
<div class="t" style="left:102.50px;top:788.00px;font-size:13px;transform:scaleX(1.0223)">Bischke</div>
<div class="t" style="left:286.80px;top:788.00px;font-size:13px;transform:scaleX(0.9682)">69999</div>
<div class="t" style="left:371.80px;top:788.00px;font-size:13px;transform:scaleX(0.9682)">10064</div>
<div class="t" style="left:448.80px;top:788.00px;font-size:13px;transform:scaleX(0.9682)">132724</div>
<div class="t" style="left:517.80px;top:788.00px;font-size:13px;transform:scaleX(0.9682)">10064</div>
<div class="t" style="left:618.80px;top:788.00px;font-size:13px;transform:scaleX(0.9682)">10</div>
<div class="t" style="left:685.80px;top:788.00px;font-size:13px;transform:scaleX(0.9682)">0</div>
<div class="t" style="left:761.80px;top:788.00px;font-size:13px;transform:scaleX(0.9881)">24,7</div>
<div class="t" style="left:850.80px;top:788.00px;font-size:13px;transform:scaleX(0.9682)">0</div>
<div class="t" style="left:882.80px;top:788.00px;font-size:13px;transform:scaleX(0.9808)">17,664</div>
<div class="t" style="left:987.80px;top:788.00px;font-size:13px;transform:scaleX(0.9682)">0</div>
<div class="t" style="left:1045.80px;top:788.00px;font-size:13px;transform:scaleX(0.9682)">400</div>
<div class="t" style="left:1129.80px;top:788.00px;font-size:13px;color:#006100;transform:scaleX(0.9682)">246</div>
</div></body></html>
